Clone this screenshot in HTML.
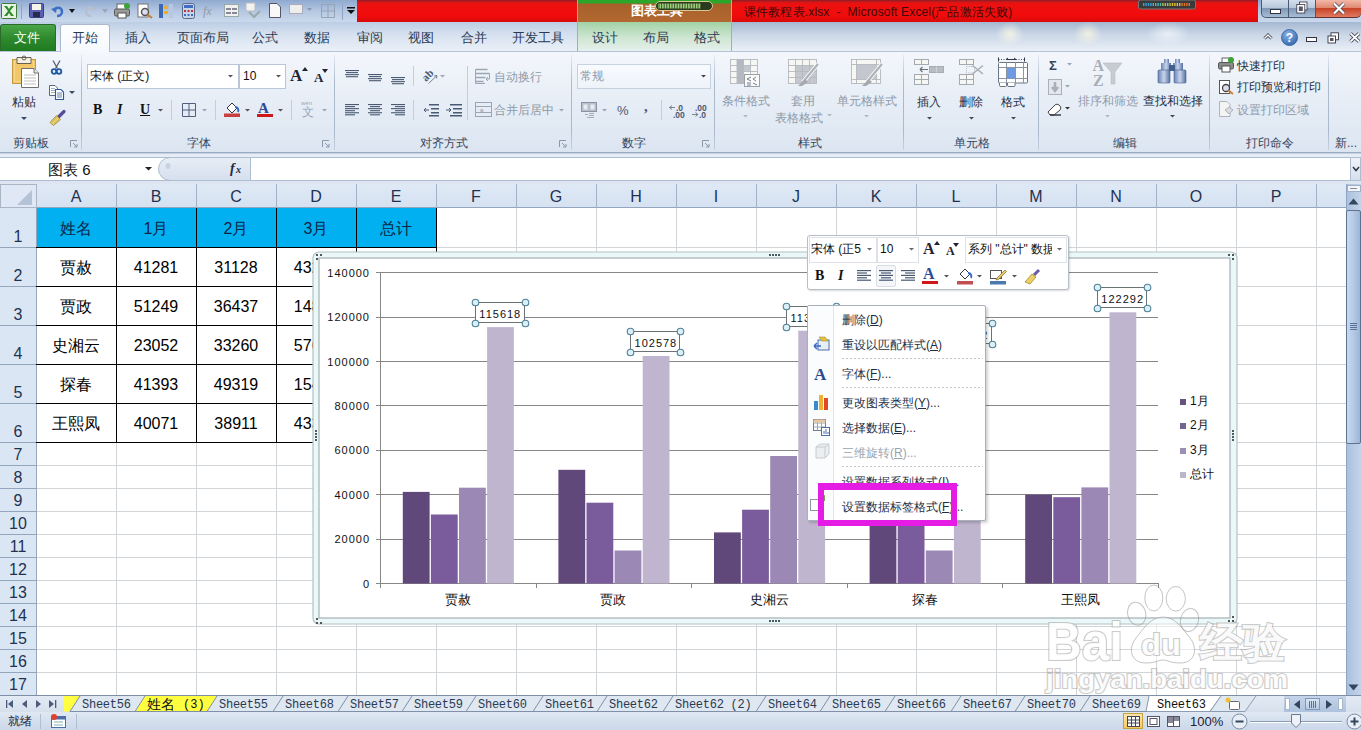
<!DOCTYPE html>
<html><head><meta charset="utf-8">
<style>
*{margin:0;padding:0;box-sizing:border-box}
html,body{width:1361px;height:730px;overflow:hidden;background:#fff;font-family:"Liberation Sans",sans-serif;position:relative}
.a{position:absolute}
.t{position:absolute;white-space:nowrap;line-height:1}
svg{position:absolute;overflow:visible}
</style></head><body>

<div class="a" style="left:0px;top:0px;width:1361px;height:24px;background:linear-gradient(#8fa9cf,#b4c7e2 45%,#cfdcee)"></div>
<svg style="left:1px;top:3px" width="16" height="16"><rect x="0.5" y="0.5" width="15" height="15" rx="1" fill="#e8f4e0" stroke="#3c7a3c"/><path d="M3 3 L7 8 L3 13 H6 L8 10 L10 13 H13 L9 8 L13 3 H10 L8 6 L6 3Z" fill="#2e8b2e"/></svg>
<div class="a" style="left:21px;top:4px;width:1px;height:15px;background:#8ea4c2"></div>
<svg style="left:29px;top:3px" width="15" height="15"><rect x="0.5" y="0.5" width="14" height="14" rx="1" fill="#5a5fb0" stroke="#3a3f80"/><rect x="3" y="1" width="9" height="6" fill="#f4f4e8"/><rect x="4" y="9" width="7" height="5" fill="#2a2a50"/></svg>
<svg style="left:51px;top:4px" width="14" height="14"><path d="M3 7 C3 3 11 2 11 8 C11 11 8 12 6 12" stroke="#3f6fc2" stroke-width="2.5" fill="none"/><path d="M0 5 L6 3 L5 9Z" fill="#3f6fc2"/></svg>
<svg style="left:69px;top:9px" width="6" height="4"><path d="M0 0H6L3 4Z" fill="#111"/></svg>
<svg style="left:83px;top:4px" width="14" height="14"><path d="M11 7 C11 3 3 2 3 8 C3 11 6 12 8 12" stroke="#b7c0cc" stroke-width="2.5" fill="none"/></svg>
<svg style="left:102px;top:9px" width="6" height="4"><path d="M0 0H6L3 4Z" fill="#9aa6b6"/></svg>
<svg style="left:114px;top:3px" width="16" height="16"><rect x="3" y="1" width="9" height="6" fill="#fff" stroke="#666"/><rect x="0.5" y="6" width="15" height="7" rx="1.5" fill="#9a9a9a" stroke="#555"/><rect x="4" y="10" width="8" height="5" fill="#fff" stroke="#555"/><circle cx="13" cy="3" r="3" fill="#3aa43a"/></svg>
<svg style="left:137px;top:3px" width="16" height="16"><rect x="1" y="1" width="10" height="13" fill="#fff" stroke="#777"/><circle cx="8" cy="9" r="3.5" fill="#dde" stroke="#555" stroke-width="1.5"/><path d="M10.5 11.5 L15 15" stroke="#c98030" stroke-width="2"/></svg>
<svg style="left:158px;top:3px" width="16" height="16"><rect x="1" y="1" width="4" height="14" fill="#3c68b8"/><rect x="6" y="3" width="4" height="3" fill="#e8b030"/><rect x="6" y="8" width="4" height="3" fill="#e8b030"/><rect x="11" y="1" width="4" height="14" fill="#b8c8e0"/></svg>
<svg style="left:182px;top:3px" width="13" height="16"><rect x="0.5" y="0.5" width="12" height="15" rx="2" fill="#c8d4e8" stroke="#5a6a88"/><rect x="2" y="2" width="9" height="3" fill="#3f6fc2"/><g fill="#c03030"><rect x="2" y="7" width="2" height="2"/><rect x="5.5" y="7" width="2" height="2"/><rect x="9" y="7" width="2" height="2"/></g><g fill="#3f6fc2"><rect x="2" y="11" width="2" height="2"/><rect x="5.5" y="11" width="2" height="2"/><rect x="9" y="11" width="2" height="2"/></g></svg>
<div class="t" style="left:203px;top:5px;font-size:12px;color:#8f9aa8;font-family:'Liberation Serif',serif"><i>fx</i></div>
<svg style="left:224px;top:4px" width="15" height="13"><rect x="0.5" y="0.5" width="14" height="12" fill="#f0f0f0" stroke="#9aa"/><rect x="2" y="4" width="5" height="2" fill="#889"/><rect x="8" y="4" width="5" height="2" fill="#889"/><rect x="2" y="8" width="5" height="2" fill="#889"/><rect x="8" y="8" width="5" height="2" fill="#889"/></svg>
<svg style="left:245px;top:3px" width="16" height="16"><rect x="1" y="0" width="9" height="8" fill="#f2f2f2" stroke="#bbb"/><path d="M4 9 L9 14 L15 8" stroke="#9aa" stroke-width="2" fill="none"/></svg>
<svg style="left:269px;top:3px" width="12" height="15"><path d="M0.5 0.5 H8 L11.5 4 V14.5 H0.5Z" fill="#f8f8f8" stroke="#556"/></svg>
<svg style="left:289px;top:4px" width="16" height="14"><rect x="0.5" y="0.5" width="13" height="9" fill="#eee" stroke="#aab"/><path d="M4 10 L7 14 L8 10" fill="#ccd"/></svg>
<svg style="left:307px;top:8px" width="5" height="3"><path d="M0 0H5L2.5 3Z" fill="#8a96a6"/></svg>
<svg style="left:321px;top:4px" width="14" height="14"><path d="M0.5 0.5H13.5V13.5H0.5ZM7 0.5V13.5M0.5 7H13.5" stroke="#95a3b5" fill="none"/></svg>
<div class="a" style="left:342px;top:4px;width:1px;height:16px;background:#8ea4c2"></div>
<svg style="left:347px;top:7px" width="8" height="8"><rect x="0" y="0" width="8" height="1.5" fill="#111"/><path d="M0 3H8L4 7Z" fill="#111"/></svg>
<div class="a" style="left:357px;top:0px;width:901px;height:22px;background:linear-gradient(#8a1c28 0,#d01818 2px,#ee1010 4px,#f20c0c 70%,#d80a0a)"></div>
<div class="a" style="left:578px;top:0px;width:154px;height:22px;background:linear-gradient(#2aa62a 0,#2aa62a 3px,#a8602a 4px,#b26830 100%)"></div>
<div class="a" style="left:577px;top:0px;width:1px;height:50px;background:#9ab89a"></div>
<div class="a" style="left:731px;top:0px;width:1px;height:50px;background:#9ab89a"></div>
<div class="t" style="left:631px;top:4px;font-size:13px;color:#fff;font-weight:bold">图表工具</div>
<svg style="left:655px;top:1px" width="58" height="10"><rect x="0.5" y="0.5" width="57" height="9" rx="4.5" fill="#2c3a1e" stroke="#d8c890"/><rect x="3" y="2.5" width="43" height="5" fill="#9ad07a"/><g stroke="#2c3a1e" stroke-width="0.8"><line x1="4.0" y1="2" x2="4.0" y2="8"/><line x1="6.6" y1="2" x2="6.6" y2="8"/><line x1="9.2" y1="2" x2="9.2" y2="8"/><line x1="11.8" y1="2" x2="11.8" y2="8"/><line x1="14.4" y1="2" x2="14.4" y2="8"/><line x1="17.0" y1="2" x2="17.0" y2="8"/><line x1="19.6" y1="2" x2="19.6" y2="8"/><line x1="22.2" y1="2" x2="22.2" y2="8"/><line x1="24.8" y1="2" x2="24.8" y2="8"/><line x1="27.400000000000002" y1="2" x2="27.400000000000002" y2="8"/><line x1="30.0" y1="2" x2="30.0" y2="8"/><line x1="32.6" y1="2" x2="32.6" y2="8"/><line x1="35.2" y1="2" x2="35.2" y2="8"/><line x1="37.800000000000004" y1="2" x2="37.800000000000004" y2="8"/><line x1="40.4" y1="2" x2="40.4" y2="8"/><line x1="43.0" y1="2" x2="43.0" y2="8"/><line x1="45.6" y1="2" x2="45.6" y2="8"/></g></svg>
<div class="t" style="left:744px;top:6px;font-size:12px;color:#3a0a0a;white-space:pre;letter-spacing:0.15px">课件教程表.xlsx  -  Microsoft Excel(产品激活失败)</div>
<svg style="left:1138px;top:0px" width="58" height="10"><rect x="0.5" y="0" width="57" height="9" rx="2" fill="#3a3a3a" stroke="#777"/><rect x="5.0" y="3" width="1.4" height="3" fill="#3aa0d8"/><rect x="7.4" y="3" width="1.4" height="3" fill="#3aa0d8"/><rect x="9.8" y="3" width="1.4" height="3" fill="#3aa0d8"/><rect x="12.2" y="3" width="1.4" height="3" fill="#3aa0d8"/><rect x="14.6" y="3" width="1.4" height="3" fill="#48b8b8"/><rect x="17.0" y="3" width="1.4" height="3" fill="#48b8b8"/><rect x="19.4" y="3" width="1.4" height="3" fill="#48b8b8"/><rect x="21.8" y="3" width="1.4" height="3" fill="#48b8b8"/><rect x="24.2" y="3" width="1.4" height="3" fill="#a8c848"/><rect x="26.599999999999998" y="3" width="1.4" height="3" fill="#a8c848"/><rect x="29.0" y="3" width="1.4" height="3" fill="#a8c848"/><rect x="31.4" y="3" width="1.4" height="3" fill="#a8c848"/><rect x="33.8" y="3" width="1.4" height="3" fill="#e8c030"/><rect x="36.2" y="3" width="1.4" height="3" fill="#e8c030"/><rect x="38.6" y="3" width="1.4" height="3" fill="#e8c030"/><rect x="41.0" y="3" width="1.4" height="3" fill="#e8c030"/><rect x="43.4" y="3" width="1.4" height="3" fill="#e87030"/><rect x="45.8" y="3" width="1.4" height="3" fill="#e87030"/><rect x="48.199999999999996" y="3" width="1.4" height="3" fill="#e87030"/><rect x="50.6" y="3" width="1.4" height="3" fill="#e87030"/></svg>
<div class="a" style="left:1261px;top:0px;width:100px;height:18px;background:linear-gradient(#d4dfec,#b8c8dc 45%,#8098b6 50%,#a8bcd4);border:1px solid #4a5a72;border-top:none;border-radius:0 0 5px 5px"></div>
<div class="a" style="left:1315px;top:0px;width:46px;height:18px;background:linear-gradient(#f2b8a8,#e08870 45%,#c84428 50%,#e07a60);border-radius:0 0 5px 0;border-bottom:1px solid #6a3030"></div>
<div class="a" style="left:1288px;top:0px;width:1px;height:17px;background:#4a5a72"></div>
<div class="a" style="left:1315px;top:0px;width:1px;height:17px;background:#4a5a72"></div>
<div class="a" style="left:1270px;top:9px;width:11px;height:5px;background:#fff;border:1px solid #334"></div>
<svg style="left:1295px;top:1px" width="13" height="14"><rect x="4.5" y="1" width="7.5" height="8" fill="#fff" stroke="#334" stroke-width="0.8"/><rect x="1.8" y="3.5" width="8" height="8.5" fill="#fff" stroke="#334" stroke-width="0.8"/><rect x="3.8" y="5.5" width="4" height="4.5" fill="#556"/></svg>
<svg style="left:1332px;top:2px" width="14" height="13"><path d="M2 1.5L12 11.5M12 1.5L2 11.5" stroke="#445" stroke-width="3.6"/><path d="M2 1.5L12 11.5M12 1.5L2 11.5" stroke="#fff" stroke-width="2.2"/></svg>
<div class="a" style="left:0px;top:22px;width:1361px;height:29px;background:linear-gradient(#bccde4,#d5e0ef 40%,#eaf0f7)"></div>
<div class="a" style="left:578px;top:22px;width:154px;height:29px;background:linear-gradient(#a2d2a6,#cfe6d2 55%,#e6f0ec)"></div>
<div class="a" style="left:577px;top:22px;width:1px;height:29px;background:#8cbf8c"></div>
<div class="a" style="left:731px;top:22px;width:1px;height:29px;background:#8cbf8c"></div>
<div class="a" style="left:0px;top:24px;width:56px;height:27px;background:linear-gradient(#4aa548,#2f8a2e 50%,#1f7a20);border-radius:3px 3px 0 0;border:1px solid #2a6a2a;border-bottom:none"></div>
<div class="t" style="left:14px;top:31px;font-size:13px;color:#f4fff0;">文件</div>
<div class="a" style="left:60px;top:24px;width:50px;height:28px;background:linear-gradient(#fdfeff,#f6f9fd);border:1px solid #aab9cd;border-bottom:none;border-radius:3px 3px 0 0"></div>
<div class="t" style="left:72px;top:31px;font-size:13px;color:#2a3a52;">开始</div>
<div class="t" style="left:125px;top:31px;font-size:13px;color:#2a3a52;">插入</div>
<div class="t" style="left:177px;top:31px;font-size:13px;color:#2a3a52;">页面布局</div>
<div class="t" style="left:252px;top:31px;font-size:13px;color:#2a3a52;">公式</div>
<div class="t" style="left:304px;top:31px;font-size:13px;color:#2a3a52;">数据</div>
<div class="t" style="left:357px;top:31px;font-size:13px;color:#2a3a52;">审阅</div>
<div class="t" style="left:408px;top:31px;font-size:13px;color:#2a3a52;">视图</div>
<div class="t" style="left:461px;top:31px;font-size:13px;color:#2a3a52;">合并</div>
<div class="t" style="left:512px;top:31px;font-size:13px;color:#2a3a52;">开发工具</div>
<div class="t" style="left:592px;top:31px;font-size:13px;color:#2a3a52;">设计</div>
<div class="t" style="left:643px;top:31px;font-size:13px;color:#2a3a52;">布局</div>
<div class="t" style="left:694px;top:31px;font-size:13px;color:#2a3a52;">格式</div>
<div class="a" style="left:732px;top:22px;width:629px;height:29px;background:radial-gradient(ellipse 14px 12px at 278px 12px,rgba(250,248,230,0.8),rgba(250,248,230,0) 100%),radial-gradient(ellipse 14px 12px at 356px 12px,rgba(250,246,225,0.8),rgba(250,246,225,0) 100%),radial-gradient(ellipse 22px 12px at 436px 12px,rgba(240,244,250,0.8),rgba(240,244,250,0) 100%),linear-gradient(rgba(150,170,196,0.6),rgba(190,204,222,0.45) 45%,rgba(238,242,248,0.2))"></div>
<svg style="left:1263px;top:33px" width="10" height="7"><path d="M1.5 5.5L5 2L8.5 5.5" stroke="#334" stroke-width="3" fill="none"/><path d="M1.5 5.5L5 2L8.5 5.5" stroke="#fff" stroke-width="1.4" fill="none"/></svg>
<svg style="left:1281px;top:29px" width="17" height="17"><defs><radialGradient id="hq" cx="0.4" cy="0.3" r="0.7"><stop offset="0" stop-color="#8ab4e8"/><stop offset="1" stop-color="#3a6cb0"/></radialGradient></defs><circle cx="8.5" cy="8.5" r="8" fill="url(#hq)" stroke="#2d5a98" stroke-width="0.8"/><text x="8.5" y="13" font-size="12" font-weight="bold" text-anchor="middle" fill="#fff" font-family="Liberation Sans">?</text></svg>
<div class="a" style="left:1306px;top:37px;width:11px;height:5px;background:#fff;border:1px solid #334"></div>
<svg style="left:1327px;top:32px" width="13" height="12"><rect x="4" y="0.8" width="7.5" height="7" fill="#fff" stroke="#334" stroke-width="0.9"/><rect x="1" y="4" width="7.5" height="7" fill="#fff" stroke="#334" stroke-width="0.9"/><rect x="3" y="6" width="3.5" height="3" fill="#556"/></svg>
<svg style="left:1349px;top:32px" width="12" height="11"><path d="M1.5 1.5L10 9.5M10 1.5L1.5 9.5" stroke="#334" stroke-width="3.4"/><path d="M1.5 1.5L10 9.5M10 1.5L1.5 9.5" stroke="#fff" stroke-width="1.8"/></svg>
<div class="a" style="left:0px;top:51px;width:1361px;height:103px;background:linear-gradient(#f4f7fc,#e9eff7 40%,#dbe5f1 100%)"></div>
<div class="a" style="left:0px;top:51px;width:1361px;height:1px;background:#b4c3d7"></div>
<div class="a" style="left:61px;top:50px;width:48px;height:3px;background:#f5f8fc"></div>
<div class="a" style="left:0px;top:152px;width:1361px;height:1px;background:#9aabc2"></div>
<div class="a" style="left:0px;top:153px;width:1361px;height:1px;background:#c4d1e2"></div>
<div class="a" style="left:81px;top:55px;width:1px;height:95px;background:linear-gradient(rgba(160,176,198,0.2),#aab9cc 30%,#aab9cc 80%,rgba(160,176,198,0.4))"></div>
<div class="a" style="left:334px;top:55px;width:1px;height:95px;background:linear-gradient(rgba(160,176,198,0.2),#aab9cc 30%,#aab9cc 80%,rgba(160,176,198,0.4))"></div>
<div class="a" style="left:571px;top:55px;width:1px;height:95px;background:linear-gradient(rgba(160,176,198,0.2),#aab9cc 30%,#aab9cc 80%,rgba(160,176,198,0.4))"></div>
<div class="a" style="left:714px;top:55px;width:1px;height:95px;background:linear-gradient(rgba(160,176,198,0.2),#aab9cc 30%,#aab9cc 80%,rgba(160,176,198,0.4))"></div>
<div class="a" style="left:903px;top:55px;width:1px;height:95px;background:linear-gradient(rgba(160,176,198,0.2),#aab9cc 30%,#aab9cc 80%,rgba(160,176,198,0.4))"></div>
<div class="a" style="left:1038px;top:55px;width:1px;height:95px;background:linear-gradient(rgba(160,176,198,0.2),#aab9cc 30%,#aab9cc 80%,rgba(160,176,198,0.4))"></div>
<div class="a" style="left:1209px;top:55px;width:1px;height:95px;background:linear-gradient(rgba(160,176,198,0.2),#aab9cc 30%,#aab9cc 80%,rgba(160,176,198,0.4))"></div>
<div class="a" style="left:1328px;top:55px;width:1px;height:95px;background:linear-gradient(rgba(160,176,198,0.2),#aab9cc 30%,#aab9cc 80%,rgba(160,176,198,0.4))"></div>
<svg style="left:11px;top:55px" width="30" height="34"><rect x="1.5" y="4.5" width="23" height="24" fill="#f2c66a" stroke="#c99a3a"/><rect x="3.5" y="6.5" width="19" height="20" fill="none" stroke="#f8dc98" stroke-width="0.8"/><path d="M6 2.5H20V8.5H6Z" fill="#f4f0e4" stroke="#6a6050"/><circle cx="13" cy="3" r="2" fill="none" stroke="#6a6050"/><path d="M10.5 13.5H23L27.5 18V32.5H10.5Z" fill="#fff" stroke="#707070"/><path d="M23 13.5V18H27.5" fill="#e8e8e8" stroke="#707070"/><g stroke="#c0c0c0"><line x1="13" y1="20" x2="25" y2="20"/><line x1="13" y1="23" x2="25" y2="23"/><line x1="13" y1="26" x2="25" y2="26"/><line x1="13" y1="29" x2="25" y2="29"/></g></svg>
<div class="t" style="left:12px;top:96px;font-size:12px;color:#1e2e44;">粘贴</div>
<svg style="left:21px;top:117px" width="6" height="3.5"><path d="M0 0H6L3.0 3.0Z" fill="#3a4a60"/></svg>
<svg style="left:51px;top:60px" width="11" height="15"><path d="M2 0.5L6.5 8.5M9 0.5L4.5 8.5" stroke="#5a6070" stroke-width="1.3"/><circle cx="3" cy="11.5" r="2.3" fill="#dfe8f4" stroke="#1f5aa0" stroke-width="1.8"/><circle cx="8" cy="11.5" r="2.3" fill="#dfe8f4" stroke="#1f5aa0" stroke-width="1.8"/></svg>
<svg style="left:49px;top:85px" width="16" height="15"><path d="M0.5 0.5H6L8.5 3V10.5H0.5Z" fill="#fff" stroke="#5a6a80"/><path d="M2 3.5H6M2 5.5H7M2 7.5H7" stroke="#8a9ab0" stroke-width="0.8"/><path d="M6.5 4.5H12L14.5 7V14.5H6.5Z" fill="#fff" stroke="#2a5a9a" stroke-width="1.1"/><path d="M8 8H13M8 10H13M8 12H13" stroke="#4a74b0" stroke-width="0.9"/></svg>
<svg style="left:69px;top:91px" width="6" height="3.5"><path d="M0 0H6L3.0 3.0Z" fill="#3a4a60"/></svg>
<svg style="left:49px;top:110px" width="17" height="16"><path d="M10 6.5L15 1.5" stroke="#5a4a9a" stroke-width="3.2" stroke-linecap="round"/><path d="M1 12.5L7.5 5.5L11.5 9.5L4.5 15.5Z" fill="#e8d070" stroke="#9a8030" stroke-width="0.8"/><path d="M3 12L8 7M5 13.5L10 9" stroke="#c8a840" stroke-width="0.7"/></svg>
<div class="t" style="left:13px;top:137px;font-size:12px;color:#34455c;">剪贴板</div>
<svg style="left:70px;top:140px" width="8" height="8"><path d="M0.5 7V0.5H7" stroke="#8a98ac" fill="none"/><path d="M3 3L7 7M7 4V7H4" stroke="#8a98ac" fill="none"/></svg>
<div class="a" style="left:87px;top:64px;width:152px;height:25px;background:#fff;border:1px solid #b8c6d8"></div>
<div class="a" style="left:239px;top:64px;width:47px;height:25px;background:#fff;border:1px solid #b8c6d8"></div>
<div class="t" style="left:90px;top:70px;font-size:12px;color:#111;">宋体 (正文)</div>
<svg style="left:228px;top:75px" width="5" height="3.0"><path d="M0 0H5L2.5 2.5Z" fill="#555"/></svg>
<div class="t" style="left:243px;top:70px;font-size:12px;color:#111;">10</div>
<svg style="left:276px;top:75px" width="5" height="3.0"><path d="M0 0H5L2.5 2.5Z" fill="#555"/></svg>
<div class="t" style="left:290px;top:67px;font-size:17px;color:#223;font-family:'Liberation Serif',serif;font-weight:bold">A</div>
<svg style="left:302px;top:67px" width="6" height="4"><path d="M0 4L3 0L6 4Z" fill="#223"/></svg>
<div class="t" style="left:314px;top:71px;font-size:13px;color:#223;font-family:'Liberation Serif',serif;font-weight:bold">A</div>
<svg style="left:322px;top:69px" width="6" height="4"><path d="M0 0L3 4L6 0Z" fill="#223"/></svg>
<div class="t" style="left:93px;top:103px;font-size:14px;color:#111;font-family:'Liberation Serif',serif;font-weight:bold">B</div>
<div class="t" style="left:117px;top:103px;font-size:14px;color:#111;font-family:'Liberation Serif',serif;font-style:italic;font-weight:bold">I</div>
<div class="t" style="left:140px;top:103px;font-size:14px;color:#111;font-family:'Liberation Serif',serif;font-weight:bold"><u>U</u></div>
<svg style="left:158px;top:109px" width="5" height="3.0"><path d="M0 0H5L2.5 2.5Z" fill="#555"/></svg>
<div class="a" style="left:171px;top:100px;width:1px;height:20px;background:#c2cedd"></div>
<svg style="left:182px;top:103px" width="14" height="14"><path d="M0.5 0.5H13.5V13.5H0.5ZM7 0.5V13.5M0.5 7H13.5" stroke="#50607a" fill="none"/></svg>
<svg style="left:202px;top:109px" width="5" height="3.0"><path d="M0 0H5L2.5 2.5Z" fill="#9aa6b6"/></svg>
<div class="a" style="left:215px;top:100px;width:1px;height:20px;background:#c2cedd"></div>
<svg style="left:224px;top:102px" width="16" height="15"><path d="M3 6L8 1L13 6L8 11Z" fill="#fff" stroke="#333"/><path d="M11 5C14 5 15 8 14 10" stroke="#3a6ac8" stroke-width="2" fill="none"/><rect x="0" y="11.5" width="16" height="3.5" fill="#c84040"/></svg>
<svg style="left:245px;top:109px" width="5" height="3.0"><path d="M0 0H5L2.5 2.5Z" fill="#555"/></svg>
<div class="t" style="left:258px;top:101px;font-size:15px;color:#2a4a9a;font-family:'Liberation Serif',serif;font-weight:bold">A</div>
<div class="a" style="left:257px;top:114px;width:16px;height:3px;background:#d01818"></div>
<svg style="left:278px;top:109px" width="5" height="3.0"><path d="M0 0H5L2.5 2.5Z" fill="#555"/></svg>
<div class="a" style="left:291px;top:100px;width:1px;height:20px;background:#c2cedd"></div>
<div class="t" style="left:301px;top:100px;font-size:6px;color:#9aa6b6;">wén</div>
<div class="t" style="left:302px;top:106px;font-size:12px;color:#9aa6b6;">文</div>
<svg style="left:322px;top:109px" width="5" height="3.0"><path d="M0 0H5L2.5 2.5Z" fill="#9aa6b6"/></svg>
<div class="t" style="left:187px;top:137px;font-size:12px;color:#34455c;">字体</div>
<svg style="left:322px;top:140px" width="8" height="8"><path d="M0.5 7V0.5H7" stroke="#8a98ac" fill="none"/><path d="M3 3L7 7M7 4V7H4" stroke="#8a98ac" fill="none"/></svg>
<svg style="left:345px;top:70px" width="16" height="16"><rect x="0" y="0.00" width="14" height="1.1" fill="#4a5a72"/><rect x="1" y="2.05" width="12" height="1.1" fill="#4a5a72"/><rect x="0" y="4.10" width="14" height="1.1" fill="#4a5a72"/><rect x="1" y="6.15" width="12" height="1.1" fill="#4a5a72"/></svg>
<svg style="left:368px;top:74px" width="16" height="16"><rect x="0" y="0.00" width="14" height="1.1" fill="#4a5a72"/><rect x="1" y="2.05" width="12" height="1.1" fill="#4a5a72"/><rect x="0" y="4.10" width="14" height="1.1" fill="#4a5a72"/><rect x="1" y="6.15" width="12" height="1.1" fill="#4a5a72"/></svg>
<svg style="left:391px;top:77px" width="16" height="16"><rect x="0" y="0.00" width="14" height="1.1" fill="#4a5a72"/><rect x="1" y="2.05" width="12" height="1.1" fill="#4a5a72"/><rect x="0" y="4.10" width="14" height="1.1" fill="#4a5a72"/><rect x="1" y="6.15" width="12" height="1.1" fill="#4a5a72"/></svg>
<svg style="left:345px;top:104px" width="16" height="16"><rect x="0" y="0.00" width="14" height="1.1" fill="#4a5a72"/><rect x="0" y="2.05" width="10" height="1.1" fill="#4a5a72"/><rect x="0" y="4.10" width="14" height="1.1" fill="#4a5a72"/><rect x="0" y="6.15" width="10" height="1.1" fill="#4a5a72"/><rect x="0" y="8.20" width="14" height="1.1" fill="#4a5a72"/><rect x="0" y="10.25" width="10" height="1.1" fill="#4a5a72"/></svg>
<svg style="left:368px;top:104px" width="16" height="16"><rect x="0" y="0.00" width="14" height="1.1" fill="#4a5a72"/><rect x="2" y="2.05" width="10" height="1.1" fill="#4a5a72"/><rect x="0" y="4.10" width="14" height="1.1" fill="#4a5a72"/><rect x="2" y="6.15" width="10" height="1.1" fill="#4a5a72"/><rect x="0" y="8.20" width="14" height="1.1" fill="#4a5a72"/><rect x="2" y="10.25" width="10" height="1.1" fill="#4a5a72"/></svg>
<svg style="left:391px;top:104px" width="16" height="16"><rect x="0" y="0.00" width="14" height="1.1" fill="#4a5a72"/><rect x="4" y="2.05" width="10" height="1.1" fill="#4a5a72"/><rect x="0" y="4.10" width="14" height="1.1" fill="#4a5a72"/><rect x="4" y="6.15" width="10" height="1.1" fill="#4a5a72"/><rect x="0" y="8.20" width="14" height="1.1" fill="#4a5a72"/><rect x="4" y="10.25" width="10" height="1.1" fill="#4a5a72"/></svg>
<div class="a" style="left:413px;top:66px;width:1px;height:20px;background:#c2cedd"></div>
<div class="a" style="left:413px;top:100px;width:1px;height:20px;background:#c2cedd"></div>
<svg style="left:421px;top:68px" width="18" height="17"><text x="0" y="0" font-size="11" fill="#4a5a72" font-family="Liberation Serif" font-weight="bold" transform="translate(5 14) rotate(-45)">ab</text><path d="M7.5 15.5L16 7.5M16 7.5L13 8M16 7.5L15.5 10.5" stroke="#6a7888" stroke-width="0.9" fill="none"/></svg>
<svg style="left:440px;top:75px" width="5" height="3.0"><path d="M0 0H5L2.5 2.5Z" fill="#9aa6b6"/></svg>
<svg style="left:423px;top:103px" width="16" height="14"><g fill="#4a5a72"><rect x="6" y="1" width="10" height="1.5"/><rect x="8" y="5" width="8" height="1.5"/><rect x="8" y="9" width="8" height="1.5"/><rect x="6" y="12" width="10" height="1.5"/></g><path d="M1 7H6M1 7L3 5M1 7L3 9" stroke="#4a5a72"/></svg>
<svg style="left:446px;top:103px" width="16" height="14"><g fill="#4a5a72"><rect x="4" y="1" width="12" height="1.5"/><rect x="7" y="5" width="9" height="1.5"/><rect x="7" y="9" width="9" height="1.5"/><rect x="4" y="12" width="12" height="1.5"/></g><path d="M0 7H5M5 7L3 5M5 7L3 9" stroke="#4a5a72"/></svg>
<div class="a" style="left:467px;top:66px;width:1px;height:54px;background:#c2cedd"></div>
<svg style="left:475px;top:69px" width="17" height="15"><path d="M0.5 0.5H12.5M0.5 4.5H14.5M0.5 8.5H10.5M0.5 12.5H8.5" stroke="#9aa6b6" stroke-width="1.3"/><path d="M0.5 0.5V14.5H10" stroke="#9aa6b6" fill="none"/><path d="M14.5 4.5V10H11M11 10L13 8M11 10L13 12" stroke="#9aa6b6" fill="none"/></svg>
<div class="t" style="left:494px;top:71px;font-size:12px;color:#8e9aa9;">自动换行</div>
<svg style="left:475px;top:102px" width="17" height="15"><rect x="0.5" y="0.5" width="16" height="14" fill="none" stroke="#9aa6b6"/><path d="M0.5 4.5H16.5M0.5 10.5H16.5" stroke="#9aa6b6"/><text x="5" y="10" font-size="6" fill="#8a96a6" font-family="Liberation Sans">a</text></svg>
<div class="t" style="left:494px;top:104px;font-size:12px;color:#8e9aa9;">合并后居中</div>
<svg style="left:559px;top:109px" width="5" height="3.0"><path d="M0 0H5L2.5 2.5Z" fill="#9aa6b6"/></svg>
<div class="t" style="left:420px;top:137px;font-size:12px;color:#34455c;">对齐方式</div>
<svg style="left:559px;top:140px" width="8" height="8"><path d="M0.5 7V0.5H7" stroke="#8a98ac" fill="none"/><path d="M3 3L7 7M7 4V7H4" stroke="#8a98ac" fill="none"/></svg>
<div class="a" style="left:577px;top:64px;width:134px;height:25px;background:linear-gradient(#f8fbfe,#eef3fa);border:1px solid #c6d2e0"></div>
<div class="t" style="left:580px;top:70px;font-size:12px;color:#8e9aa9;">常规</div>
<svg style="left:701px;top:75px" width="5" height="3.0"><path d="M0 0H5L2.5 2.5Z" fill="#444"/></svg>
<svg style="left:581px;top:102px" width="17" height="17"><rect x="0.5" y="0.5" width="15" height="9" fill="#b8c0cc" stroke="#8a94a2"/><rect x="2.5" y="2.5" width="4" height="5" fill="#e8ecf2"/><rect x="9.5" y="2.5" width="4" height="5" fill="#e8ecf2"/><path d="M4 12.5H7M8 11.5H13M8 13.5H13M6 15.5H13" stroke="#9aa4b2" stroke-width="0.9"/></svg>
<svg style="left:602px;top:109px" width="5" height="3.0"><path d="M0 0H5L2.5 2.5Z" fill="#9aa6b6"/></svg>
<div class="t" style="left:617px;top:104px;font-size:13px;color:#4a5a72;">%</div>
<div class="t" style="left:644px;top:99px;font-size:15px;color:#4a5a72;font-weight:bold;font-family:'Liberation Serif',serif">,</div>
<div class="a" style="left:661px;top:100px;width:1px;height:20px;background:#c2cedd"></div>
<svg style="left:669px;top:104px" width="20" height="15"><text x="7" y="7" font-size="8.5" fill="#4a5a72" font-family="Liberation Sans" font-weight="bold">.0</text><text x="4" y="14" font-size="8.5" fill="#4a5a72" font-family="Liberation Sans" font-weight="bold">.00</text><path d="M0.5 3.5H6M0.5 3.5L3 1.5M0.5 3.5L3 5.5" stroke="#6a7888" stroke-width="0.9" fill="none"/></svg>
<svg style="left:691px;top:104px" width="20" height="15"><text x="4" y="7" font-size="8.5" fill="#4a5a72" font-family="Liberation Sans" font-weight="bold">.00</text><text x="8" y="14" font-size="8.5" fill="#4a5a72" font-family="Liberation Sans" font-weight="bold">.0</text><path d="M1 10.5H7M7 10.5L4.5 8.5M7 10.5L4.5 12.5" stroke="#6a7888" stroke-width="0.9" fill="none"/></svg>
<div class="t" style="left:622px;top:137px;font-size:12px;color:#34455c;">数字</div>
<svg style="left:702px;top:140px" width="8" height="8"><path d="M0.5 7V0.5H7" stroke="#8a98ac" fill="none"/><path d="M3 3L7 7M7 4V7H4" stroke="#8a98ac" fill="none"/></svg>
<svg style="left:0;top:0" width="1361" height="160"><rect x="730.5" y="59.5" width="27" height="24" fill="#f6f6f2"/><rect x="737" y="59.5" width="6.5" height="24" fill="#b4b8c0"/><rect x="743.5" y="65.5" width="6.5" height="6" fill="#c4c8ce"/><g stroke="#b4b8be" stroke-width="0.9" fill="none"><rect x="730.5" y="59.5" width="27" height="24"/><path d="M737 59.5V83.5M743.5 59.5V83.5M750.5 59.5V83.5M730.5 65.5H757.5M730.5 71.5H757.5M730.5 77.5H757.5"/></g><rect x="744.5" y="74.5" width="15" height="12" fill="#fafafa" stroke="#9aa0a8"/><path d="M747 79L751 77M747 79L751 81M747 83H751M747 85H751M756 77L753 79L756 81M753 83L757 85" stroke="#6a7080" stroke-width="0.9" fill="none"/><rect x="788.5" y="59.5" width="28" height="24" fill="#f6f6f2"/><rect x="795.5" y="65.5" width="21" height="18" fill="#c4c8ce"/><g stroke="#b4b8be" stroke-width="0.9" fill="none"><rect x="788.5" y="59.5" width="28" height="24"/><path d="M795.5 59.5V83.5M802.5 59.5V83.5M809.5 59.5V83.5M788.5 65.5H816.5M788.5 71.5H816.5M788.5 77.5H816.5"/></g><path d="M818 64L803 82" stroke="#fff" stroke-width="4"/><path d="M818 64L803 82" stroke="#b0b4ba" stroke-width="2.4"/><path d="M805 79L798 86L802 86L808 82Z" fill="#a4a8b0"/><rect x="851.5" y="59.5" width="29" height="24" fill="#f6f6f2"/><rect x="856.5" y="64.5" width="20" height="15" fill="#c4c8ce"/><g stroke="#b4b8be" stroke-width="0.9" fill="none"><rect x="851.5" y="59.5" width="29" height="24"/><path d="M856.5 59.5V83.5M876.5 59.5V83.5M851.5 64.5H880.5M851.5 79.5H880.5"/></g><path d="M882 64L867 82" stroke="#fff" stroke-width="4"/><path d="M882 64L867 82" stroke="#b0b4ba" stroke-width="2.4"/><path d="M869 79L862 86L866 86L872 82Z" fill="#a4a8b0"/></svg>
<div class="t" style="left:722px;top:95px;font-size:12px;color:#8e9aa9;">条件格式</div>
<svg style="left:743px;top:115px" width="5" height="3.0"><path d="M0 0H5L2.5 2.5Z" fill="#b0b8c4"/></svg>
<div class="t" style="left:791px;top:95px;font-size:12px;color:#8e9aa9;">套用</div>
<div class="t" style="left:775px;top:112px;font-size:12px;color:#8e9aa9;">表格格式</div>
<svg style="left:827px;top:114px" width="5" height="3.0"><path d="M0 0H5L2.5 2.5Z" fill="#b0b8c4"/></svg>
<div class="t" style="left:837px;top:95px;font-size:12px;color:#8e9aa9;">单元格样式</div>
<svg style="left:864px;top:115px" width="5" height="3.0"><path d="M0 0H5L2.5 2.5Z" fill="#b0b8c4"/></svg>
<div class="t" style="left:798px;top:137px;font-size:12px;color:#34455c;">样式</div>
<svg style="left:0;top:0" width="1361" height="160"><rect x="914.5" y="59.5" width="14" height="5" fill="#f6f6f2" stroke="#a4aab2"/><line x1="921.5" y1="59.5" x2="921.5" y2="64.5" stroke="#a4aab2"/><path d="M920 69.5H928M920 69.5L922.5 67M920 69.5L922.5 72" stroke="#6a7080" stroke-width="1.2" fill="none"/><rect x="929.5" y="66.5" width="14" height="6" fill="#b8bcc4" stroke="#a8acb4"/><line x1="936.5" y1="66.5" x2="936.5" y2="72.5" stroke="#d0d4da"/><rect x="914.5" y="74.5" width="14" height="10" fill="#f6f6f2" stroke="#a4aab2"/><line x1="921.5" y1="74.5" x2="921.5" y2="84.5" stroke="#a4aab2"/><line x1="914.5" y1="79.5" x2="928.5" y2="79.5" stroke="#a4aab2"/><rect x="959.5" y="59.5" width="14" height="5" fill="#f6f6f2" stroke="#a4aab2"/><line x1="966.5" y1="59.5" x2="966.5" y2="64.5" stroke="#a4aab2"/><rect x="966.5" y="66.5" width="8" height="6.5" fill="none" stroke="#b0b4ba" stroke-dasharray="1 1.2"/><path d="M972.5 65.5L983 74M983 65.5L972.5 74" stroke="#a8acb4" stroke-width="1.6"/><rect x="959.5" y="74.5" width="14" height="10" fill="#f6f6f2" stroke="#a4aab2"/><line x1="966.5" y1="74.5" x2="966.5" y2="84.5" stroke="#a4aab2"/><line x1="959.5" y1="79.5" x2="973.5" y2="79.5" stroke="#a4aab2"/><path d="M998.5 59.5H1024.5" stroke="#556" stroke-dasharray="1 1.5"/><path d="M1006 59.5H1016M1006 59.5L1008 58M1016 59.5L1014 58" stroke="#334" fill="none"/><path d="M998.5 57.5V61.5M1024.5 57.5V61.5" stroke="#334"/><rect x="998.5" y="62.5" width="29" height="20.5" rx="1" fill="#fff" stroke="#6a7484"/><path d="M1006.5 62.5V83M1015.5 62.5V83M1023.5 62.5V83M998.5 67.5H1027.5M998.5 78.5H1027.5" stroke="#8a94a2"/><rect x="1007" y="68" width="8.5" height="10.5" fill="#6e9ae4"/><path d="M999.5 83V85.5Q999.5 86.5 1001 86.5H1005.5Q1006.5 86.5 1006.5 85.5V83M1007.5 83V85.5Q1007.5 86.5 1009 86.5H1014Q1015 86.5 1015 85.5V83" stroke="#6a7484" fill="#fff"/></svg>
<div class="t" style="left:917px;top:96px;font-size:12px;color:#1e2e44;">插入</div>
<svg style="left:927px;top:117px" width="5" height="3.0"><path d="M0 0H5L2.5 2.5Z" fill="#3a4a60"/></svg>
<div class="t" style="left:959px;top:96px;font-size:12px;color:#1e2e44;">删除</div>
<svg style="left:969px;top:117px" width="5" height="3.0"><path d="M0 0H5L2.5 2.5Z" fill="#3a4a60"/></svg>
<div class="t" style="left:1001px;top:96px;font-size:12px;color:#1e2e44;">格式</div>
<svg style="left:1011px;top:117px" width="5" height="3.0"><path d="M0 0H5L2.5 2.5Z" fill="#3a4a60"/></svg>
<div class="t" style="left:954px;top:137px;font-size:12px;color:#34455c;">单元格</div>
<div class="t" style="left:1049px;top:59px;font-size:13px;color:#34455c;font-weight:bold">Σ</div>
<svg style="left:1067px;top:63px" width="5" height="3.0"><path d="M0 0H5L2.5 2.5Z" fill="#9aa6b6"/></svg>
<svg style="left:1048px;top:79px" width="14" height="16"><rect x="0.5" y="0.5" width="13" height="15" fill="#e4e8ee" stroke="#a8b0ba"/><path d="M7 3V11M4 8L7 12L10 8" stroke="#a8b0ba" stroke-width="2.5" fill="none"/></svg>
<svg style="left:1065px;top:85px" width="5" height="3.0"><path d="M0 0H5L2.5 2.5Z" fill="#9aa6b6"/></svg>
<svg style="left:1047px;top:103px" width="15" height="13"><path d="M1 9L8 2C9 1 11 1 12 2L13 3C14 4 14 6 13 7L7 12H3Z" fill="#fff" stroke="#444"/><path d="M3 12H14" stroke="#223" stroke-width="1.3"/></svg>
<svg style="left:1065px;top:107px" width="5" height="3.0"><path d="M0 0H5L2.5 2.5Z" fill="#333"/></svg>
<svg style="left:1092px;top:57px" width="32" height="30"><path d="M11 6H30L23 15V27H19V15Z" fill="#c8ccd2" stroke="#b8bcc2" stroke-width="0.6"/><text x="0.5" y="14" font-size="16" font-weight="bold" fill="#a8aeb6" font-family="Liberation Serif">A</text><text x="1" y="29" font-size="16" font-weight="bold" fill="#a8aeb6" font-family="Liberation Serif">Z</text></svg>
<div class="t" style="left:1078px;top:95px;font-size:12px;color:#8e9aa9;">排序和筛选</div>
<svg style="left:1105px;top:115px" width="5" height="3.0"><path d="M0 0H5L2.5 2.5Z" fill="#b0b8c4"/></svg>
<svg style="left:1158px;top:59px" width="28" height="25"><defs><linearGradient id="bn" x1="0" x2="1"><stop offset="0" stop-color="#6a84b8"/><stop offset=".5" stop-color="#c8d4ea"/><stop offset="1" stop-color="#5670a4"/></linearGradient></defs><rect x="6" y="0" width="5" height="5" fill="url(#bn)"/><rect x="17" y="0" width="5" height="5" fill="url(#bn)"/><rect x="3" y="4" width="10" height="8" fill="url(#bn)"/><rect x="15" y="4" width="10" height="8" fill="url(#bn)"/><rect x="0" y="11" width="12" height="13" rx="1" fill="url(#bn)" stroke="#44608f" stroke-width="0.6"/><rect x="16" y="11" width="12" height="13" rx="1" fill="url(#bn)" stroke="#44608f" stroke-width="0.6"/><rect x="11" y="6" width="6" height="6" fill="#44608f"/></svg>
<div class="t" style="left:1143px;top:95px;font-size:12px;color:#1e2e44;">查找和选择</div>
<svg style="left:1170px;top:115px" width="5" height="3.0"><path d="M0 0H5L2.5 2.5Z" fill="#3a4a60"/></svg>
<div class="t" style="left:1113px;top:137px;font-size:12px;color:#34455c;">编辑</div>
<svg style="left:1218px;top:57px" width="17" height="16"><rect x="4" y="1" width="8" height="5" fill="#fff" stroke="#666"/><rect x="0.5" y="5.5" width="15" height="6.5" rx="1.5" fill="#8c8c8c" stroke="#555"/><rect x="4" y="9" width="8" height="6" fill="#fff" stroke="#555"/><circle cx="13" cy="3" r="3" fill="#3aa43a"/></svg>
<div class="t" style="left:1237px;top:60px;font-size:12px;color:#1e2e44;">快速打印</div>
<svg style="left:1219px;top:80px" width="16" height="15"><rect x="0.5" y="0.5" width="10" height="13" fill="#fff" stroke="#555"/><circle cx="7" cy="8" r="3.5" fill="#dde" stroke="#444" stroke-width="1.3"/><path d="M9.5 10.5L14 14" stroke="#c98030" stroke-width="2"/></svg>
<div class="t" style="left:1237px;top:81px;font-size:12px;color:#1e2e44;">打印预览和打印</div>
<svg style="left:1219px;top:101px" width="16" height="16"><path d="M0.5 0.5H8L11 3.5V15.5H0.5Z" fill="#f4f4f4" stroke="#b0b4ba"/><path d="M6 9L10 6L14 9L10 13Z" fill="#d8dce0" stroke="#b0b4ba"/></svg>
<div class="t" style="left:1237px;top:104px;font-size:12px;color:#8e9aa9;">设置打印区域</div>
<div class="t" style="left:1246px;top:137px;font-size:12px;color:#34455c;">打印命令</div>
<div class="t" style="left:1335px;top:137px;font-size:12px;color:#34455c;">新...</div>
<div class="a" style="left:0px;top:154px;width:1361px;height:30px;background:linear-gradient(#e6edf6,#dce5f1)"></div>
<div class="a" style="left:0px;top:157px;width:1350px;height:24px;background:#fff;border-top:1px solid #aebdd0;border-bottom:1px solid #aebdd0"></div>
<div class="a" style="left:0px;top:157px;width:160px;height:24px;background:#fff;border-top:1px solid #aebdd0;border-bottom:1px solid #aebdd0"></div>
<div class="t" style="left:48px;top:162px;font-size:15px;color:#111;">图表 6</div>
<svg style="left:145px;top:167px" width="7" height="4.0"><path d="M0 0H7L3.5 3.5Z" fill="#222"/></svg>
<div class="a" style="left:158px;top:157px;width:93px;height:24px;background:linear-gradient(#e6edf6,#d6e0ee);border:1px solid #aebdd0;border-radius:12px 0 0 12px"></div>
<svg style="left:163px;top:161px" width="10" height="14"><ellipse cx="5" cy="5" rx="2.5" ry="3" fill="#c8d2e0"/></svg>
<svg style="left:229px;top:161px" width="16" height="16"><text x="1" y="12" font-size="14" font-weight="bold" font-style="italic" fill="#1e2a40" font-family="Liberation Serif">f</text><text x="7" y="12" font-size="10" font-weight="bold" font-style="italic" fill="#1e2a40" font-family="Liberation Serif">x</text></svg>
<div class="a" style="left:1350px;top:157px;width:11px;height:24px;background:linear-gradient(#eef3f9,#d6e0ee);border:1px solid #aebdd0"></div>
<svg style="left:1352px;top:166px" width="8" height="6"><path d="M1 1L4 4.5L7 1" stroke="#334" stroke-width="1.5" fill="none"/></svg>
<div class="a" style="left:0px;top:184px;width:1346px;height:511px;background:#fff"></div>
<div class="a" style="left:116px;top:208px;width:1px;height:487px;background:#d2d5d8"></div>
<div class="a" style="left:196px;top:208px;width:1px;height:487px;background:#d2d5d8"></div>
<div class="a" style="left:276px;top:208px;width:1px;height:487px;background:#d2d5d8"></div>
<div class="a" style="left:356px;top:208px;width:1px;height:487px;background:#d2d5d8"></div>
<div class="a" style="left:436px;top:208px;width:1px;height:487px;background:#d2d5d8"></div>
<div class="a" style="left:516px;top:208px;width:1px;height:487px;background:#d2d5d8"></div>
<div class="a" style="left:596px;top:208px;width:1px;height:487px;background:#d2d5d8"></div>
<div class="a" style="left:676px;top:208px;width:1px;height:487px;background:#d2d5d8"></div>
<div class="a" style="left:756px;top:208px;width:1px;height:487px;background:#d2d5d8"></div>
<div class="a" style="left:836px;top:208px;width:1px;height:487px;background:#d2d5d8"></div>
<div class="a" style="left:916px;top:208px;width:1px;height:487px;background:#d2d5d8"></div>
<div class="a" style="left:996px;top:208px;width:1px;height:487px;background:#d2d5d8"></div>
<div class="a" style="left:1076px;top:208px;width:1px;height:487px;background:#d2d5d8"></div>
<div class="a" style="left:1156px;top:208px;width:1px;height:487px;background:#d2d5d8"></div>
<div class="a" style="left:1236px;top:208px;width:1px;height:487px;background:#d2d5d8"></div>
<div class="a" style="left:1316px;top:208px;width:1px;height:487px;background:#d2d5d8"></div>
<div class="a" style="left:37px;top:247px;width:1309px;height:1px;background:#d2d5d8"></div>
<div class="a" style="left:37px;top:286px;width:1309px;height:1px;background:#d2d5d8"></div>
<div class="a" style="left:37px;top:325px;width:1309px;height:1px;background:#d2d5d8"></div>
<div class="a" style="left:37px;top:364px;width:1309px;height:1px;background:#d2d5d8"></div>
<div class="a" style="left:37px;top:403px;width:1309px;height:1px;background:#d2d5d8"></div>
<div class="a" style="left:37px;top:442px;width:1309px;height:1px;background:#d2d5d8"></div>
<div class="a" style="left:37px;top:465px;width:1309px;height:1px;background:#d2d5d8"></div>
<div class="a" style="left:37px;top:488px;width:1309px;height:1px;background:#d2d5d8"></div>
<div class="a" style="left:37px;top:511px;width:1309px;height:1px;background:#d2d5d8"></div>
<div class="a" style="left:37px;top:534px;width:1309px;height:1px;background:#d2d5d8"></div>
<div class="a" style="left:37px;top:557px;width:1309px;height:1px;background:#d2d5d8"></div>
<div class="a" style="left:37px;top:580px;width:1309px;height:1px;background:#d2d5d8"></div>
<div class="a" style="left:37px;top:603px;width:1309px;height:1px;background:#d2d5d8"></div>
<div class="a" style="left:37px;top:626px;width:1309px;height:1px;background:#d2d5d8"></div>
<div class="a" style="left:37px;top:649px;width:1309px;height:1px;background:#d2d5d8"></div>
<div class="a" style="left:37px;top:672px;width:1309px;height:1px;background:#d2d5d8"></div>
<div class="a" style="left:37px;top:695px;width:1309px;height:1px;background:#d2d5d8"></div>
<div class="a" style="left:0px;top:184px;width:1346px;height:24px;background:linear-gradient(#dfe9f6,#d6e2f1);border-bottom:1px solid #93a6bd"></div>
<div class="a" style="left:36px;top:184px;width:1px;height:24px;background:#9fb2c8"></div>
<div class="t" style="left:-24.0px;top:189px;width:200px;text-align:center;font-size:16px;color:#1e3250;">A</div>
<div class="a" style="left:116px;top:184px;width:1px;height:24px;background:#9fb2c8"></div>
<div class="t" style="left:56.0px;top:189px;width:200px;text-align:center;font-size:16px;color:#1e3250;">B</div>
<div class="a" style="left:196px;top:184px;width:1px;height:24px;background:#9fb2c8"></div>
<div class="t" style="left:136.0px;top:189px;width:200px;text-align:center;font-size:16px;color:#1e3250;">C</div>
<div class="a" style="left:276px;top:184px;width:1px;height:24px;background:#9fb2c8"></div>
<div class="t" style="left:216.0px;top:189px;width:200px;text-align:center;font-size:16px;color:#1e3250;">D</div>
<div class="a" style="left:356px;top:184px;width:1px;height:24px;background:#9fb2c8"></div>
<div class="t" style="left:296.0px;top:189px;width:200px;text-align:center;font-size:16px;color:#1e3250;">E</div>
<div class="a" style="left:436px;top:184px;width:1px;height:24px;background:#9fb2c8"></div>
<div class="t" style="left:376.0px;top:189px;width:200px;text-align:center;font-size:16px;color:#1e3250;">F</div>
<div class="a" style="left:516px;top:184px;width:1px;height:24px;background:#9fb2c8"></div>
<div class="t" style="left:456.0px;top:189px;width:200px;text-align:center;font-size:16px;color:#1e3250;">G</div>
<div class="a" style="left:596px;top:184px;width:1px;height:24px;background:#9fb2c8"></div>
<div class="t" style="left:536.0px;top:189px;width:200px;text-align:center;font-size:16px;color:#1e3250;">H</div>
<div class="a" style="left:676px;top:184px;width:1px;height:24px;background:#9fb2c8"></div>
<div class="t" style="left:616.0px;top:189px;width:200px;text-align:center;font-size:16px;color:#1e3250;">I</div>
<div class="a" style="left:756px;top:184px;width:1px;height:24px;background:#9fb2c8"></div>
<div class="t" style="left:696.0px;top:189px;width:200px;text-align:center;font-size:16px;color:#1e3250;">J</div>
<div class="a" style="left:836px;top:184px;width:1px;height:24px;background:#9fb2c8"></div>
<div class="t" style="left:776.0px;top:189px;width:200px;text-align:center;font-size:16px;color:#1e3250;">K</div>
<div class="a" style="left:916px;top:184px;width:1px;height:24px;background:#9fb2c8"></div>
<div class="t" style="left:856.0px;top:189px;width:200px;text-align:center;font-size:16px;color:#1e3250;">L</div>
<div class="a" style="left:996px;top:184px;width:1px;height:24px;background:#9fb2c8"></div>
<div class="t" style="left:936.0px;top:189px;width:200px;text-align:center;font-size:16px;color:#1e3250;">M</div>
<div class="a" style="left:1076px;top:184px;width:1px;height:24px;background:#9fb2c8"></div>
<div class="t" style="left:1016.0px;top:189px;width:200px;text-align:center;font-size:16px;color:#1e3250;">N</div>
<div class="a" style="left:1156px;top:184px;width:1px;height:24px;background:#9fb2c8"></div>
<div class="t" style="left:1096.0px;top:189px;width:200px;text-align:center;font-size:16px;color:#1e3250;">O</div>
<div class="a" style="left:1236px;top:184px;width:1px;height:24px;background:#9fb2c8"></div>
<div class="t" style="left:1176.0px;top:189px;width:200px;text-align:center;font-size:16px;color:#1e3250;">P</div>
<div class="a" style="left:1316px;top:184px;width:1px;height:24px;background:#9fb2c8"></div>
<div class="a" style="left:0px;top:184px;width:37px;height:24px;background:#dfe8f4;border:1px solid #a9b6c6"></div>
<svg style="left:0;top:184px" width="36" height="24"><path d="M32 6 L32 21 L17 21 Z" fill="#b4c2d6"/></svg>
<div class="a" style="left:0px;top:208px;width:36px;height:487px;background:#dbe6f4"></div>
<div class="a" style="left:36px;top:208px;width:1px;height:487px;background:#93a6bd"></div>
<div class="a" style="left:0px;top:247px;width:36px;height:1px;background:#93a6bd"></div>
<div class="t" style="left:0.0px;top:229px;width:36px;text-align:center;font-size:16px;color:#1e3250;">1</div>
<div class="a" style="left:0px;top:286px;width:36px;height:1px;background:#93a6bd"></div>
<div class="t" style="left:0.0px;top:268px;width:36px;text-align:center;font-size:16px;color:#1e3250;">2</div>
<div class="a" style="left:0px;top:325px;width:36px;height:1px;background:#93a6bd"></div>
<div class="t" style="left:0.0px;top:307px;width:36px;text-align:center;font-size:16px;color:#1e3250;">3</div>
<div class="a" style="left:0px;top:364px;width:36px;height:1px;background:#93a6bd"></div>
<div class="t" style="left:0.0px;top:346px;width:36px;text-align:center;font-size:16px;color:#1e3250;">4</div>
<div class="a" style="left:0px;top:403px;width:36px;height:1px;background:#93a6bd"></div>
<div class="t" style="left:0.0px;top:385px;width:36px;text-align:center;font-size:16px;color:#1e3250;">5</div>
<div class="a" style="left:0px;top:442px;width:36px;height:1px;background:#93a6bd"></div>
<div class="t" style="left:0.0px;top:424px;width:36px;text-align:center;font-size:16px;color:#1e3250;">6</div>
<div class="a" style="left:0px;top:465px;width:36px;height:1px;background:#93a6bd"></div>
<div class="t" style="left:0.0px;top:447px;width:36px;text-align:center;font-size:16px;color:#1e3250;">7</div>
<div class="a" style="left:0px;top:488px;width:36px;height:1px;background:#93a6bd"></div>
<div class="t" style="left:0.0px;top:470px;width:36px;text-align:center;font-size:16px;color:#1e3250;">8</div>
<div class="a" style="left:0px;top:511px;width:36px;height:1px;background:#93a6bd"></div>
<div class="t" style="left:0.0px;top:493px;width:36px;text-align:center;font-size:16px;color:#1e3250;">9</div>
<div class="a" style="left:0px;top:534px;width:36px;height:1px;background:#93a6bd"></div>
<div class="t" style="left:0.0px;top:516px;width:36px;text-align:center;font-size:16px;color:#1e3250;">10</div>
<div class="a" style="left:0px;top:557px;width:36px;height:1px;background:#93a6bd"></div>
<div class="t" style="left:0.0px;top:539px;width:36px;text-align:center;font-size:16px;color:#1e3250;">11</div>
<div class="a" style="left:0px;top:580px;width:36px;height:1px;background:#93a6bd"></div>
<div class="t" style="left:0.0px;top:562px;width:36px;text-align:center;font-size:16px;color:#1e3250;">12</div>
<div class="a" style="left:0px;top:603px;width:36px;height:1px;background:#93a6bd"></div>
<div class="t" style="left:0.0px;top:585px;width:36px;text-align:center;font-size:16px;color:#1e3250;">13</div>
<div class="a" style="left:0px;top:626px;width:36px;height:1px;background:#93a6bd"></div>
<div class="t" style="left:0.0px;top:608px;width:36px;text-align:center;font-size:16px;color:#1e3250;">14</div>
<div class="a" style="left:0px;top:649px;width:36px;height:1px;background:#93a6bd"></div>
<div class="t" style="left:0.0px;top:631px;width:36px;text-align:center;font-size:16px;color:#1e3250;">15</div>
<div class="a" style="left:0px;top:672px;width:36px;height:1px;background:#93a6bd"></div>
<div class="t" style="left:0.0px;top:654px;width:36px;text-align:center;font-size:16px;color:#1e3250;">16</div>
<div class="a" style="left:0px;top:695px;width:36px;height:1px;background:#93a6bd"></div>
<div class="t" style="left:0.0px;top:677px;width:36px;text-align:center;font-size:16px;color:#1e3250;">17</div>
<div class="a" style="left:37px;top:208px;width:400px;height:39px;background:#00b0f0"></div>
<div class="t" style="left:36.0px;top:221px;width:80px;text-align:center;font-size:16px;color:#0c2448;">姓名</div>
<div class="t" style="left:116.0px;top:221px;width:80px;text-align:center;font-size:16px;color:#0c2448;">1月</div>
<div class="t" style="left:196.0px;top:221px;width:80px;text-align:center;font-size:16px;color:#0c2448;">2月</div>
<div class="t" style="left:276.0px;top:221px;width:80px;text-align:center;font-size:16px;color:#0c2448;">3月</div>
<div class="t" style="left:356.0px;top:221px;width:80px;text-align:center;font-size:16px;color:#0c2448;">总计</div>
<div class="t" style="left:36.0px;top:260px;width:80px;text-align:center;font-size:16px;color:#000;">贾赦</div>
<div class="t" style="left:116.0px;top:260px;width:80px;text-align:center;font-size:16px;color:#000;">41281</div>
<div class="t" style="left:196.0px;top:260px;width:80px;text-align:center;font-size:16px;color:#000;">31128</div>
<div class="t" style="left:276.0px;top:260px;width:80px;text-align:center;font-size:16px;color:#000;">43209</div>
<div class="t" style="left:356.0px;top:260px;width:80px;text-align:center;font-size:16px;color:#000;">115618</div>
<div class="t" style="left:36.0px;top:299px;width:80px;text-align:center;font-size:16px;color:#000;">贾政</div>
<div class="t" style="left:116.0px;top:299px;width:80px;text-align:center;font-size:16px;color:#000;">51249</div>
<div class="t" style="left:196.0px;top:299px;width:80px;text-align:center;font-size:16px;color:#000;">36437</div>
<div class="t" style="left:276.0px;top:299px;width:80px;text-align:center;font-size:16px;color:#000;">14892</div>
<div class="t" style="left:356.0px;top:299px;width:80px;text-align:center;font-size:16px;color:#000;">102578</div>
<div class="t" style="left:36.0px;top:338px;width:80px;text-align:center;font-size:16px;color:#000;">史湘云</div>
<div class="t" style="left:116.0px;top:338px;width:80px;text-align:center;font-size:16px;color:#000;">23052</div>
<div class="t" style="left:196.0px;top:338px;width:80px;text-align:center;font-size:16px;color:#000;">33260</div>
<div class="t" style="left:276.0px;top:338px;width:80px;text-align:center;font-size:16px;color:#000;">57660</div>
<div class="t" style="left:356.0px;top:338px;width:80px;text-align:center;font-size:16px;color:#000;">113972</div>
<div class="t" style="left:36.0px;top:377px;width:80px;text-align:center;font-size:16px;color:#000;">探春</div>
<div class="t" style="left:116.0px;top:377px;width:80px;text-align:center;font-size:16px;color:#000;">41393</div>
<div class="t" style="left:196.0px;top:377px;width:80px;text-align:center;font-size:16px;color:#000;">49319</div>
<div class="t" style="left:276.0px;top:377px;width:80px;text-align:center;font-size:16px;color:#000;">15432</div>
<div class="t" style="left:356.0px;top:377px;width:80px;text-align:center;font-size:16px;color:#000;">106144</div>
<div class="t" style="left:36.0px;top:416px;width:80px;text-align:center;font-size:16px;color:#000;">王熙凤</div>
<div class="t" style="left:116.0px;top:416px;width:80px;text-align:center;font-size:16px;color:#000;">40071</div>
<div class="t" style="left:196.0px;top:416px;width:80px;text-align:center;font-size:16px;color:#000;">38911</div>
<div class="t" style="left:276.0px;top:416px;width:80px;text-align:center;font-size:16px;color:#000;">43310</div>
<div class="t" style="left:356.0px;top:416px;width:80px;text-align:center;font-size:16px;color:#000;">122292</div>
<div class="a" style="left:36px;top:247px;width:401px;height:1px;background:#000"></div>
<div class="a" style="left:36px;top:286px;width:401px;height:1px;background:#000"></div>
<div class="a" style="left:36px;top:325px;width:401px;height:1px;background:#000"></div>
<div class="a" style="left:36px;top:364px;width:401px;height:1px;background:#000"></div>
<div class="a" style="left:36px;top:403px;width:401px;height:1px;background:#000"></div>
<div class="a" style="left:36px;top:442px;width:401px;height:1px;background:#000"></div>
<div class="a" style="left:116px;top:208px;width:1px;height:235px;background:#000"></div>
<div class="a" style="left:196px;top:208px;width:1px;height:235px;background:#000"></div>
<div class="a" style="left:276px;top:208px;width:1px;height:235px;background:#000"></div>
<div class="a" style="left:356px;top:208px;width:1px;height:235px;background:#000"></div>
<div class="a" style="left:436px;top:208px;width:1px;height:235px;background:#000"></div>
<div class="a" style="left:1346px;top:184px;width:15px;height:511px;background:linear-gradient(90deg,#a8bfdd,#b9cce5 60%,#c2d3ea)"></div>
<div class="a" style="left:1346px;top:184px;width:1px;height:511px;background:#8ea4c2"></div>
<div class="a" style="left:1347px;top:185px;width:14px;height:7px;background:#f2f6fb;border:1px solid #9fb0c6"></div>
<div class="a" style="left:1350px;top:188px;width:7px;height:1px;background:#889"></div>
<svg style="left:1348px;top:198px" width="11" height="7"><path d="M0.5 6.5L5.5 0.5L10.5 6.5Z" fill="#34465e"/></svg>
<div class="a" style="left:1346px;top:210px;width:15px;height:234px;background:linear-gradient(90deg,#c8daf0,#b4c9e4 50%,#9cb4d6);border:1px solid #5f7290;border-radius:2px"></div>
<div class="a" style="left:1350px;top:323px;width:7px;height:1px;background:#5a7296"></div>
<div class="a" style="left:1350px;top:325px;width:7px;height:1px;background:#5a7296"></div>
<div class="a" style="left:1350px;top:327px;width:7px;height:1px;background:#5a7296"></div>
<div class="a" style="left:1350px;top:329px;width:7px;height:1px;background:#5a7296"></div>
<svg style="left:1348px;top:684px" width="11" height="7"><path d="M0.5 0.5L5.5 6.5L10.5 0.5Z" fill="#34465e"/></svg>
<div class="a" style="left:0px;top:695px;width:1361px;height:17px;background:linear-gradient(#e4ebf5,#d6e0ec)"></div>
<div class="a" style="left:0px;top:695px;width:1361px;height:1px;background:#7d8ea6"></div>
<svg style="left:6px;top:699px" width="58" height="10"><g fill="#4a5e7a"><rect x="0" y="1" width="1.3" height="8"/><path d="M7 1L2 5L7 9Z"/><path d="M21 1L16 5L21 9Z"/><path d="M30 1L35 5L30 9Z"/><path d="M43 1L48 5L43 9Z"/><rect x="49" y="1" width="1.3" height="8"/></g></svg>
<svg style="left:0;top:0" width="1361" height="730"><polygon points="64,696 80,696 70,711.5 64,711.5" fill="#ffff40"/></svg>
<svg style="left:0;top:0" width="1361" height="730"><polygon points="70,711.5 80,696 197,696 187,711.5" fill="#dfe7f1"/><path d="M70 711.5 L80 696" stroke="#7f90a8" fill="none"/><path d="M70 711.5 H187" stroke="#7f90a8"/></svg>
<div class="t" style="left:82px;top:699px;font-size:12px;color:#2a3a52;font-family:'Liberation Mono',monospace;letter-spacing:-0.25px">Sheet56</div>
<svg style="left:0;top:0" width="1361" height="730"><polygon points="135,711.5 145,696 269,696 259,711.5" fill="#ffff40"/><path d="M135 711.5 L145 696" stroke="#7f90a8" fill="none"/><path d="M135 711.5 H259" stroke="#7f90a8"/></svg>
<div class="t" style="left:147px;top:697px;font-size:14px;color:#111;">姓名</div>
<div class="t" style="left:183px;top:699px;font-size:12px;color:#111;font-family:'Liberation Mono',monospace">(3)</div>
<svg style="left:0;top:0" width="1361" height="730"><polygon points="207,711.5 217,696 335,696 325,711.5" fill="#dfe7f1"/><path d="M207 711.5 L217 696" stroke="#7f90a8" fill="none"/><path d="M207 711.5 H325" stroke="#7f90a8"/></svg>
<div class="t" style="left:219px;top:699px;font-size:12px;color:#2a3a52;font-family:'Liberation Mono',monospace;letter-spacing:-0.25px">Sheet55</div>
<svg style="left:0;top:0" width="1361" height="730"><polygon points="273,711.5 283,696 400,696 390,711.5" fill="#dfe7f1"/><path d="M273 711.5 L283 696" stroke="#7f90a8" fill="none"/><path d="M273 711.5 H390" stroke="#7f90a8"/></svg>
<div class="t" style="left:285px;top:699px;font-size:12px;color:#2a3a52;font-family:'Liberation Mono',monospace;letter-spacing:-0.25px">Sheet68</div>
<svg style="left:0;top:0" width="1361" height="730"><polygon points="338,711.5 348,696 464,696 454,711.5" fill="#dfe7f1"/><path d="M338 711.5 L348 696" stroke="#7f90a8" fill="none"/><path d="M338 711.5 H454" stroke="#7f90a8"/></svg>
<div class="t" style="left:350px;top:699px;font-size:12px;color:#2a3a52;font-family:'Liberation Mono',monospace;letter-spacing:-0.25px">Sheet57</div>
<svg style="left:0;top:0" width="1361" height="730"><polygon points="402,711.5 412,696 528,696 518,711.5" fill="#dfe7f1"/><path d="M402 711.5 L412 696" stroke="#7f90a8" fill="none"/><path d="M402 711.5 H518" stroke="#7f90a8"/></svg>
<div class="t" style="left:414px;top:699px;font-size:12px;color:#2a3a52;font-family:'Liberation Mono',monospace;letter-spacing:-0.25px">Sheet59</div>
<svg style="left:0;top:0" width="1361" height="730"><polygon points="466,711.5 476,696 595,696 585,711.5" fill="#dfe7f1"/><path d="M466 711.5 L476 696" stroke="#7f90a8" fill="none"/><path d="M466 711.5 H585" stroke="#7f90a8"/></svg>
<div class="t" style="left:478px;top:699px;font-size:12px;color:#2a3a52;font-family:'Liberation Mono',monospace;letter-spacing:-0.25px">Sheet60</div>
<svg style="left:0;top:0" width="1361" height="730"><polygon points="533,711.5 543,696 659,696 649,711.5" fill="#dfe7f1"/><path d="M533 711.5 L543 696" stroke="#7f90a8" fill="none"/><path d="M533 711.5 H649" stroke="#7f90a8"/></svg>
<div class="t" style="left:545px;top:699px;font-size:12px;color:#2a3a52;font-family:'Liberation Mono',monospace;letter-spacing:-0.25px">Sheet61</div>
<svg style="left:0;top:0" width="1361" height="730"><polygon points="597,711.5 607,696 725,696 715,711.5" fill="#dfe7f1"/><path d="M597 711.5 L607 696" stroke="#7f90a8" fill="none"/><path d="M597 711.5 H715" stroke="#7f90a8"/></svg>
<div class="t" style="left:609px;top:699px;font-size:12px;color:#2a3a52;font-family:'Liberation Mono',monospace;letter-spacing:-0.25px">Sheet62</div>
<svg style="left:0;top:0" width="1361" height="730"><polygon points="663,711.5 673,696 818,696 808,711.5" fill="#dfe7f1"/><path d="M663 711.5 L673 696" stroke="#7f90a8" fill="none"/><path d="M663 711.5 H808" stroke="#7f90a8"/></svg>
<div class="t" style="left:675px;top:699px;font-size:12px;color:#2a3a52;font-family:'Liberation Mono',monospace;letter-spacing:-0.25px">Sheet62 (2)</div>
<svg style="left:0;top:0" width="1361" height="730"><polygon points="756,711.5 766,696 882,696 872,711.5" fill="#dfe7f1"/><path d="M756 711.5 L766 696" stroke="#7f90a8" fill="none"/><path d="M756 711.5 H872" stroke="#7f90a8"/></svg>
<div class="t" style="left:768px;top:699px;font-size:12px;color:#2a3a52;font-family:'Liberation Mono',monospace;letter-spacing:-0.25px">Sheet64</div>
<svg style="left:0;top:0" width="1361" height="730"><polygon points="820,711.5 830,696 947,696 937,711.5" fill="#dfe7f1"/><path d="M820 711.5 L830 696" stroke="#7f90a8" fill="none"/><path d="M820 711.5 H937" stroke="#7f90a8"/></svg>
<div class="t" style="left:832px;top:699px;font-size:12px;color:#2a3a52;font-family:'Liberation Mono',monospace;letter-spacing:-0.25px">Sheet65</div>
<svg style="left:0;top:0" width="1361" height="730"><polygon points="885,711.5 895,696 1013,696 1003,711.5" fill="#dfe7f1"/><path d="M885 711.5 L895 696" stroke="#7f90a8" fill="none"/><path d="M885 711.5 H1003" stroke="#7f90a8"/></svg>
<div class="t" style="left:897px;top:699px;font-size:12px;color:#2a3a52;font-family:'Liberation Mono',monospace;letter-spacing:-0.25px">Sheet66</div>
<svg style="left:0;top:0" width="1361" height="730"><polygon points="951,711.5 961,696 1077,696 1067,711.5" fill="#dfe7f1"/><path d="M951 711.5 L961 696" stroke="#7f90a8" fill="none"/><path d="M951 711.5 H1067" stroke="#7f90a8"/></svg>
<div class="t" style="left:963px;top:699px;font-size:12px;color:#2a3a52;font-family:'Liberation Mono',monospace;letter-spacing:-0.25px">Sheet67</div>
<svg style="left:0;top:0" width="1361" height="730"><polygon points="1015,711.5 1025,696 1142,696 1132,711.5" fill="#dfe7f1"/><path d="M1015 711.5 L1025 696" stroke="#7f90a8" fill="none"/><path d="M1015 711.5 H1132" stroke="#7f90a8"/></svg>
<div class="t" style="left:1027px;top:699px;font-size:12px;color:#2a3a52;font-family:'Liberation Mono',monospace;letter-spacing:-0.25px">Sheet70</div>
<svg style="left:0;top:0" width="1361" height="730"><polygon points="1080,711.5 1090,696 1210,696 1200,711.5" fill="#dfe7f1"/><path d="M1080 711.5 L1090 696" stroke="#7f90a8" fill="none"/><path d="M1080 711.5 H1200" stroke="#7f90a8"/></svg>
<div class="t" style="left:1092px;top:699px;font-size:12px;color:#2a3a52;font-family:'Liberation Mono',monospace;letter-spacing:-0.25px">Sheet69</div>
<svg style="left:0;top:0" width="1361" height="730"><polygon points="1149,696 1221,696 1210,711.5 1146,711.5" fill="#fff"/><path d="M1149 696 L1146 711.5 H1210 L1221 696" stroke="#8c9cb2" fill="none"/></svg>
<div class="t" style="left:1157px;top:699px;font-size:12px;color:#111;font-family:'Liberation Mono',monospace;letter-spacing:-0.25px">Sheet63</div>
<svg style="left:0;top:0" width="1361" height="730"><path d="M1221 696 L1210 711.5 H1245 L1256 696" stroke="#8c9cb2" fill="#dfe7f1"/><circle cx="1228" cy="700" r="2.5" fill="#f0c030"/><rect x="1229.5" y="701.5" width="10" height="8" rx="1" fill="#fff" stroke="#667"/></svg>
<div class="a" style="left:1284px;top:696px;width:62px;height:16px;background:linear-gradient(#c4d4ea,#aec2de)"></div>
<div class="a" style="left:1285px;top:698px;width:5px;height:12px;background:#fff;border:1px solid #a8b8cc"></div>
<svg style="left:1294px;top:700px" width="6" height="9"><path d="M6 0L0 4.5L6 9Z" fill="#34455c"/></svg>
<div class="a" style="left:1305px;top:698px;width:15px;height:12px;background:linear-gradient(#d8e4f2,#b8cbe4);border:1px solid #7f98bc"></div>
<div class="a" style="left:1309px;top:701px;width:1px;height:7px;background:#5a7296"></div>
<div class="a" style="left:1311px;top:701px;width:1px;height:7px;background:#5a7296"></div>
<div class="a" style="left:1313px;top:701px;width:1px;height:7px;background:#5a7296"></div>
<div class="a" style="left:1315px;top:701px;width:1px;height:7px;background:#5a7296"></div>
<svg style="left:1326px;top:700px" width="6" height="9"><path d="M0 0L6 4.5L0 9Z" fill="#34455c"/></svg>
<div class="a" style="left:1338px;top:698px;width:5px;height:12px;background:#fff;border:1px solid #a8b8cc"></div>
<div class="a" style="left:0px;top:712px;width:1361px;height:18px;background:linear-gradient(#dfe8f3,#cbd8e9)"></div>
<div class="t" style="left:8px;top:715px;font-size:12px;color:#223;">就绪</div>
<div class="a" style="left:40px;top:714px;width:1px;height:15px;background:#b0bed0"></div>
<svg style="left:50px;top:714px" width="16" height="14"><rect x="1.5" y="2.5" width="14" height="11" fill="#fff" stroke="#4a6ea8"/><rect x="1.5" y="2.5" width="14" height="3" fill="#4a6ea8"/><circle cx="4" cy="3" r="3" fill="#e04030"/><path d="M4 8H13M4 11H13" stroke="#8aa"/></svg>
<div class="a" style="left:76px;top:714px;width:1px;height:15px;background:#b0bed0"></div>
<div class="a" style="left:1123px;top:713px;width:20px;height:16px;background:linear-gradient(#fde8a8,#f8c860);border:1px solid #c8a040"></div>
<svg style="left:1127px;top:716px" width="13" height="11"><rect x="0.5" y="0.5" width="12" height="10" fill="#fff" stroke="#445"/><path d="M4.5 0.5V10.5M8.5 0.5V10.5M0.5 4H12.5M0.5 7H12.5" stroke="#445"/></svg>
<svg style="left:1147px;top:716px" width="13" height="11"><rect x="0.5" y="0.5" width="12" height="10" fill="#fff" stroke="#556"/><rect x="3" y="2.5" width="7" height="6" fill="none" stroke="#556"/></svg>
<svg style="left:1167px;top:716px" width="13" height="11"><rect x="0.5" y="0.5" width="12" height="10" fill="#fff" stroke="#556"/><path d="M6.5 0.5V10.5" stroke="#556"/><rect x="1" y="1" width="5" height="6" fill="#889"/><rect x="7" y="1" width="5" height="4" fill="#889"/></svg>
<div class="t" style="left:1190px;top:715px;font-size:13px;color:#223;">100%</div>
<svg style="left:1231px;top:713px" width="17" height="17"><circle cx="8.5" cy="8.5" r="7.5" fill="#e8eef6" stroke="#7a8aa2"/><rect x="4.5" y="7.5" width="8" height="2" fill="#34455c"/></svg>
<div class="a" style="left:1250px;top:721px;width:92px;height:1px;background:#8a9ab2"></div>
<div class="a" style="left:1250px;top:722px;width:92px;height:1px;background:#fff"></div>
<svg style="left:1291px;top:714px" width="10" height="14"><path d="M0.5 0.5H9.5V9L5 13.5L0.5 9Z" fill="#eef2f8" stroke="#6a7a92"/></svg>
<svg style="left:1346px;top:713px" width="17" height="17"><circle cx="8.5" cy="8.5" r="7.5" fill="#e8eef6" stroke="#7a8aa2"/><rect x="4.5" y="7.5" width="8" height="2" fill="#34455c"/><rect x="7.5" y="4.5" width="2" height="8" fill="#34455c"/></svg>
<svg style="left:312px;top:251px" width="926" height="374"><rect x="1" y="1" width="924" height="372" rx="6" fill="#eaf8fa" stroke="#b4c2c4" stroke-width="1.2"/><rect x="7" y="7" width="911" height="360" fill="#fff" stroke="#a4b0b2" stroke-width="1.2"/></svg>
<div class="a" style="left:316px;top:254px;width:2px;height:2px;background:#555"></div>
<div class="a" style="left:320px;top:254px;width:2px;height:2px;background:#555"></div>
<div class="a" style="left:316px;top:258px;width:2px;height:2px;background:#555"></div>
<div class="a" style="left:1228px;top:254px;width:2px;height:2px;background:#555"></div>
<div class="a" style="left:1232px;top:254px;width:2px;height:2px;background:#555"></div>
<div class="a" style="left:1232px;top:258px;width:2px;height:2px;background:#555"></div>
<div class="a" style="left:316px;top:618px;width:2px;height:2px;background:#555"></div>
<div class="a" style="left:316px;top:622px;width:2px;height:2px;background:#555"></div>
<div class="a" style="left:320px;top:622px;width:2px;height:2px;background:#555"></div>
<div class="a" style="left:1232px;top:616px;width:2px;height:2px;background:#555"></div>
<div class="a" style="left:1228px;top:620px;width:2px;height:2px;background:#555"></div>
<div class="a" style="left:1232px;top:620px;width:2px;height:2px;background:#555"></div>
<div class="a" style="left:769px;top:254px;width:2px;height:2px;background:#4a5a5e"></div>
<div class="a" style="left:772px;top:254px;width:2px;height:2px;background:#4a5a5e"></div>
<div class="a" style="left:775px;top:254px;width:2px;height:2px;background:#4a5a5e"></div>
<div class="a" style="left:778px;top:254px;width:2px;height:2px;background:#4a5a5e"></div>
<div class="a" style="left:769px;top:620px;width:2px;height:2px;background:#4a5a5e"></div>
<div class="a" style="left:772px;top:620px;width:2px;height:2px;background:#4a5a5e"></div>
<div class="a" style="left:775px;top:620px;width:2px;height:2px;background:#4a5a5e"></div>
<div class="a" style="left:778px;top:620px;width:2px;height:2px;background:#4a5a5e"></div>
<div class="a" style="left:315px;top:430px;width:2px;height:2px;background:#4a5a5e"></div>
<div class="a" style="left:315px;top:433px;width:2px;height:2px;background:#4a5a5e"></div>
<div class="a" style="left:315px;top:436px;width:2px;height:2px;background:#4a5a5e"></div>
<div class="a" style="left:315px;top:439px;width:2px;height:2px;background:#4a5a5e"></div>
<div class="a" style="left:1232px;top:430px;width:2px;height:2px;background:#4a5a5e"></div>
<div class="a" style="left:1232px;top:433px;width:2px;height:2px;background:#4a5a5e"></div>
<div class="a" style="left:1232px;top:436px;width:2px;height:2px;background:#4a5a5e"></div>
<div class="a" style="left:1232px;top:439px;width:2px;height:2px;background:#4a5a5e"></div>
<svg style="left:0;top:0" width="1361" height="730"><line x1="376" y1="583.5" x2="1158" y2="583.5" stroke="#878787" stroke-width="1"/><line x1="376" y1="539.5" x2="1158" y2="539.5" stroke="#878787" stroke-width="1"/><line x1="376" y1="494.5" x2="1158" y2="494.5" stroke="#878787" stroke-width="1"/><line x1="376" y1="450.5" x2="1158" y2="450.5" stroke="#878787" stroke-width="1"/><line x1="376" y1="405.5" x2="1158" y2="405.5" stroke="#878787" stroke-width="1"/><line x1="376" y1="361.5" x2="1158" y2="361.5" stroke="#878787" stroke-width="1"/><line x1="376" y1="317.5" x2="1158" y2="317.5" stroke="#878787" stroke-width="1"/><line x1="376" y1="272.5" x2="1158" y2="272.5" stroke="#878787" stroke-width="1"/><line x1="380.5" y1="272" x2="380.5" y2="588" stroke="#878787"/><line x1="380.5" y1="583" x2="380.5" y2="588" stroke="#878787"/><line x1="536.5" y1="583" x2="536.5" y2="588" stroke="#878787"/><line x1="691.5" y1="583" x2="691.5" y2="588" stroke="#878787"/><line x1="847.5" y1="583" x2="847.5" y2="588" stroke="#878787"/><line x1="1002.5" y1="583" x2="1002.5" y2="588" stroke="#878787"/><line x1="1158.5" y1="583" x2="1158.5" y2="588" stroke="#878787"/><rect x="402.8" y="491.9" width="26.8" height="91.6" fill="#60497a"/><rect x="430.9" y="514.5" width="26.8" height="69.0" fill="#7a5c9d"/><rect x="459.0" y="487.7" width="26.8" height="95.8" fill="#9c88b5"/><rect x="487.1" y="327.1" width="26.8" height="256.4" fill="#c0b5cf"/><rect x="558.4" y="469.8" width="26.8" height="113.7" fill="#60497a"/><rect x="586.5" y="502.7" width="26.8" height="80.8" fill="#7a5c9d"/><rect x="614.6" y="550.5" width="26.8" height="33.0" fill="#9c88b5"/><rect x="642.7" y="356.0" width="26.8" height="227.5" fill="#c0b5cf"/><rect x="714.0" y="532.4" width="26.8" height="51.1" fill="#60497a"/><rect x="742.1" y="509.7" width="26.8" height="73.8" fill="#7a5c9d"/><rect x="770.2" y="456.0" width="26.8" height="127.5" fill="#9c88b5"/><rect x="798.3" y="330.7" width="26.8" height="252.8" fill="#c0b5cf"/><rect x="869.6" y="491.7" width="26.8" height="91.8" fill="#60497a"/><rect x="897.7" y="474.1" width="26.8" height="109.4" fill="#7a5c9d"/><rect x="925.8" y="550.5" width="26.8" height="33.0" fill="#9c88b5"/><rect x="953.9" y="347.8" width="26.8" height="235.7" fill="#c0b5cf"/><rect x="1025.2" y="494.6" width="26.8" height="88.9" fill="#60497a"/><rect x="1053.3" y="497.2" width="26.8" height="86.3" fill="#7a5c9d"/><rect x="1081.4" y="487.4" width="26.8" height="96.1" fill="#9c88b5"/><rect x="1109.5" y="312.3" width="26.8" height="271.2" fill="#c0b5cf"/></svg>
<div class="t" style="left:300px;top:578.5px;width:70px;text-align:right;font-size:11px;letter-spacing:1px;color:#111">0</div>
<div class="t" style="left:300px;top:534.1px;width:70px;text-align:right;font-size:11px;letter-spacing:1px;color:#111">20000</div>
<div class="t" style="left:300px;top:489.8px;width:70px;text-align:right;font-size:11px;letter-spacing:1px;color:#111">40000</div>
<div class="t" style="left:300px;top:445.4px;width:70px;text-align:right;font-size:11px;letter-spacing:1px;color:#111">60000</div>
<div class="t" style="left:300px;top:401.1px;width:70px;text-align:right;font-size:11px;letter-spacing:1px;color:#111">80000</div>
<div class="t" style="left:300px;top:356.7px;width:70px;text-align:right;font-size:11px;letter-spacing:1px;color:#111">100000</div>
<div class="t" style="left:300px;top:312.4px;width:70px;text-align:right;font-size:11px;letter-spacing:1px;color:#111">120000</div>
<div class="t" style="left:300px;top:268.0px;width:70px;text-align:right;font-size:11px;letter-spacing:1px;color:#111">140000</div>
<div class="t" style="left:417.8px;top:593px;width:80px;text-align:center;font-size:13px;color:#111;">贾赦</div>
<div class="t" style="left:573.4px;top:593px;width:80px;text-align:center;font-size:13px;color:#111;">贾政</div>
<div class="t" style="left:729.0px;top:593px;width:80px;text-align:center;font-size:13px;color:#111;">史湘云</div>
<div class="t" style="left:884.6px;top:593px;width:80px;text-align:center;font-size:13px;color:#111;">探春</div>
<div class="t" style="left:1040.2px;top:593px;width:80px;text-align:center;font-size:13px;color:#111;">王熙凤</div>
<div class="a" style="left:474.8px;top:302.1px;width:50px;height:21px;background:#fff;border:1px solid #6a7274"></div>
<div class="t" style="left:474.8px;top:309.1px;width:51px;text-align:center;font-size:11px;letter-spacing:1px;color:#111">115618</div>
<svg style="left:469.8px;top:297.1px" width="61" height="32"><circle cx="5.5" cy="5.5" r="3.3" fill="#dceff6" stroke="#4f8197" stroke-width="1.1"/><circle cx="5.5" cy="26.5" r="3.3" fill="#dceff6" stroke="#4f8197" stroke-width="1.1"/><circle cx="55.5" cy="5.5" r="3.3" fill="#dceff6" stroke="#4f8197" stroke-width="1.1"/><circle cx="55.5" cy="26.5" r="3.3" fill="#dceff6" stroke="#4f8197" stroke-width="1.1"/></svg>
<div class="a" style="left:630.4px;top:331.0px;width:50px;height:21px;background:#fff;border:1px solid #6a7274"></div>
<div class="t" style="left:630.4px;top:338.0px;width:51px;text-align:center;font-size:11px;letter-spacing:1px;color:#111">102578</div>
<svg style="left:625.4px;top:326.0px" width="61" height="32"><circle cx="5.5" cy="5.5" r="3.3" fill="#dceff6" stroke="#4f8197" stroke-width="1.1"/><circle cx="5.5" cy="26.5" r="3.3" fill="#dceff6" stroke="#4f8197" stroke-width="1.1"/><circle cx="55.5" cy="5.5" r="3.3" fill="#dceff6" stroke="#4f8197" stroke-width="1.1"/><circle cx="55.5" cy="26.5" r="3.3" fill="#dceff6" stroke="#4f8197" stroke-width="1.1"/></svg>
<div class="a" style="left:786.0px;top:305.7px;width:50px;height:21px;background:#fff;border:1px solid #6a7274"></div>
<div class="t" style="left:786.0px;top:312.7px;width:51px;text-align:center;font-size:11px;letter-spacing:1px;color:#111">113972</div>
<svg style="left:781.0px;top:300.7px" width="61" height="32"><circle cx="5.5" cy="5.5" r="3.3" fill="#dceff6" stroke="#4f8197" stroke-width="1.1"/><circle cx="5.5" cy="26.5" r="3.3" fill="#dceff6" stroke="#4f8197" stroke-width="1.1"/><circle cx="55.5" cy="5.5" r="3.3" fill="#dceff6" stroke="#4f8197" stroke-width="1.1"/><circle cx="55.5" cy="26.5" r="3.3" fill="#dceff6" stroke="#4f8197" stroke-width="1.1"/></svg>
<div class="a" style="left:941.6px;top:322.8px;width:50px;height:21px;background:#fff;border:1px solid #6a7274"></div>
<div class="t" style="left:941.6px;top:329.8px;width:51px;text-align:center;font-size:11px;letter-spacing:1px;color:#111">106272</div>
<svg style="left:936.6px;top:317.8px" width="61" height="32"><circle cx="5.5" cy="5.5" r="3.3" fill="#dceff6" stroke="#4f8197" stroke-width="1.1"/><circle cx="5.5" cy="26.5" r="3.3" fill="#dceff6" stroke="#4f8197" stroke-width="1.1"/><circle cx="55.5" cy="5.5" r="3.3" fill="#dceff6" stroke="#4f8197" stroke-width="1.1"/><circle cx="55.5" cy="26.5" r="3.3" fill="#dceff6" stroke="#4f8197" stroke-width="1.1"/></svg>
<div class="a" style="left:1097.2px;top:287.3px;width:50px;height:21px;background:#fff;border:1px solid #6a7274"></div>
<div class="t" style="left:1097.2px;top:294.3px;width:51px;text-align:center;font-size:11px;letter-spacing:1px;color:#111">122292</div>
<svg style="left:1092.2px;top:282.3px" width="61" height="32"><circle cx="5.5" cy="5.5" r="3.3" fill="#dceff6" stroke="#4f8197" stroke-width="1.1"/><circle cx="5.5" cy="26.5" r="3.3" fill="#dceff6" stroke="#4f8197" stroke-width="1.1"/><circle cx="55.5" cy="5.5" r="3.3" fill="#dceff6" stroke="#4f8197" stroke-width="1.1"/><circle cx="55.5" cy="26.5" r="3.3" fill="#dceff6" stroke="#4f8197" stroke-width="1.1"/></svg>
<div class="a" style="left:1180px;top:399.0px;width:6px;height:6px;background:#65537d"></div>
<div class="t" style="left:1190px;top:395.0px;font-size:12px;color:#111;">1月</div>
<div class="a" style="left:1180px;top:423.3px;width:6px;height:6px;background:#74658f"></div>
<div class="t" style="left:1190px;top:419.3px;font-size:12px;color:#111;">2月</div>
<div class="a" style="left:1180px;top:447.6px;width:6px;height:6px;background:#9b8fb3"></div>
<div class="t" style="left:1190px;top:443.6px;font-size:12px;color:#111;">3月</div>
<div class="a" style="left:1180px;top:471.9px;width:6px;height:6px;background:#bdb6cb"></div>
<div class="t" style="left:1190px;top:467.9px;font-size:12px;color:#111;">总计</div>
<div class="a" style="left:807px;top:235px;width:262px;height:55px;background:#fff;border:1px solid #b8bec6;border-radius:3px;box-shadow:1px 1px 2px rgba(0,0,0,0.15)"></div>
<div class="a" style="left:809px;top:237px;width:68px;height:26px;background:#fff;border:1px solid #dde2e8"></div>
<div class="t" style="left:811px;top:243px;font-size:12px;color:#111;">宋体 (正5</div>
<svg style="left:867px;top:248px" width="5" height="3.0"><path d="M0 0H5L2.5 2.5Z" fill="#666"/></svg>
<div class="a" style="left:877px;top:237px;width:42px;height:26px;background:#fff;border:1px solid #dde2e8"></div>
<div class="t" style="left:880px;top:243px;font-size:12px;color:#111;">10</div>
<svg style="left:909px;top:248px" width="5" height="3.0"><path d="M0 0H5L2.5 2.5Z" fill="#666"/></svg>
<div class="t" style="left:923px;top:241px;font-size:16px;color:#223;font-family:'Liberation Serif',serif;font-weight:bold">A</div>
<svg style="left:934px;top:241px" width="6" height="4"><path d="M0 4L3 0L6 4Z" fill="#223"/></svg>
<div class="t" style="left:946px;top:245px;font-size:12px;color:#223;font-family:'Liberation Serif',serif;font-weight:bold">A</div>
<svg style="left:953px;top:243px" width="6" height="4"><path d="M0 0L3 4L6 0Z" fill="#223"/></svg>
<div class="a" style="left:965px;top:237px;width:102px;height:26px;background:#fff;border:1px solid #dde2e8"></div>
<div class="t" style="left:968px;top:243px;font-size:12px;color:#111;width:84px;overflow:hidden">系列 "总计" 数据</div>
<svg style="left:1057px;top:248px" width="5" height="3.0"><path d="M0 0H5L2.5 2.5Z" fill="#666"/></svg>
<div class="t" style="left:815px;top:269px;font-size:14px;color:#111;font-family:'Liberation Serif',serif;font-weight:bold">B</div>
<div class="t" style="left:838px;top:269px;font-size:14px;color:#111;font-family:'Liberation Serif',serif;font-style:italic;font-weight:bold">I</div>
<svg style="left:857px;top:270px" width="16" height="14"><rect x="0" y="0.0" width="14" height="1.2" fill="#4a5a72"/><rect x="0" y="2.4" width="10" height="1.2" fill="#4a5a72"/><rect x="0" y="4.8" width="14" height="1.2" fill="#4a5a72"/><rect x="0" y="7.199999999999999" width="10" height="1.2" fill="#4a5a72"/><rect x="0" y="9.6" width="14" height="1.2" fill="#4a5a72"/></svg>
<div class="a" style="left:876px;top:265px;width:20px;height:22px;background:#f4f6f9;border:1px solid #d8dde4;border-radius:2px"></div>
<svg style="left:879px;top:270px" width="16" height="14"><rect x="0" y="0.0" width="14" height="1.2" fill="#4a5a72"/><rect x="2" y="2.4" width="10" height="1.2" fill="#4a5a72"/><rect x="0" y="4.8" width="14" height="1.2" fill="#4a5a72"/><rect x="2" y="7.199999999999999" width="10" height="1.2" fill="#4a5a72"/><rect x="0" y="9.6" width="14" height="1.2" fill="#4a5a72"/></svg>
<svg style="left:901px;top:270px" width="16" height="14"><rect x="0" y="0.0" width="14" height="1.2" fill="#4a5a72"/><rect x="4" y="2.4" width="10" height="1.2" fill="#4a5a72"/><rect x="0" y="4.8" width="14" height="1.2" fill="#4a5a72"/><rect x="4" y="7.199999999999999" width="10" height="1.2" fill="#4a5a72"/><rect x="0" y="9.6" width="14" height="1.2" fill="#4a5a72"/></svg>
<div class="t" style="left:923px;top:266px;font-size:16px;color:#2a4a9a;font-family:'Liberation Serif',serif;font-weight:bold">A</div>
<div class="a" style="left:922px;top:281px;width:16px;height:3px;background:#d01818"></div>
<svg style="left:944px;top:275px" width="5" height="3.0"><path d="M0 0H5L2.5 2.5Z" fill="#555"/></svg>
<svg style="left:957px;top:268px" width="16" height="17"><path d="M3 6L8 1L13 6L8 11Z" fill="#fff" stroke="#333"/><path d="M11 5C14 5 15 8 14 10" stroke="#3a6ac8" stroke-width="2" fill="none"/><rect x="0" y="13" width="16" height="3.5" fill="#c05050"/></svg>
<svg style="left:977px;top:275px" width="5" height="3.0"><path d="M0 0H5L2.5 2.5Z" fill="#555"/></svg>
<svg style="left:990px;top:268px" width="17" height="17"><rect x="0.5" y="2.5" width="11" height="8" fill="#fff" stroke="#555"/><path d="M7 10L15 2L16.5 3.5L8.5 11.5L6 12Z" fill="#e8c860" stroke="#8a7030" stroke-width="0.7"/><rect x="0" y="13" width="16" height="3.5" fill="#4a7ab0"/></svg>
<svg style="left:1012px;top:275px" width="5" height="3.0"><path d="M0 0H5L2.5 2.5Z" fill="#555"/></svg>
<svg style="left:1024px;top:268px" width="17" height="17"><path d="M10 7L15 2" stroke="#6a58a8" stroke-width="3"/><path d="M1 14L8 6L12 9L6 16Z" fill="#e8cf6a" stroke="#a88a2a" stroke-width="0.8"/></svg>
<div class="a" style="left:807px;top:305px;width:179px;height:216px;background:#fff;border:1px solid #a8b0ba;border-radius:2px;box-shadow:2px 2px 3px rgba(0,0,0,0.18)"></div>
<div class="a" style="left:808px;top:306px;width:25px;height:214px;background:#fbfcfd"></div>
<div class="a" style="left:833px;top:306px;width:1px;height:214px;background:#e2e6ec"></div>
<div class="t" style="left:842px;top:314.2px;font-size:12px;color:#1e2e44;">删除(<u>D</u>)</div>
<div class="t" style="left:842px;top:339.0px;font-size:12px;color:#1e2e44;">重设以匹配样式(<u>A</u>)</div>
<div class="t" style="left:842px;top:367.5px;font-size:12px;color:#1e2e44;">字体(<u>F</u>)...</div>
<div class="t" style="left:842px;top:396.5px;font-size:12px;color:#1e2e44;">更改图表类型(<u>Y</u>)...</div>
<div class="t" style="left:842px;top:421.5px;font-size:12px;color:#1e2e44;">选择数据(<u>E</u>)...</div>
<div class="t" style="left:842px;top:446.5px;font-size:12px;color:#9aa4b0;">三维旋转(<u>R</u>)...</div>
<div class="t" style="left:842px;top:475.5px;font-size:12px;color:#1e2e44;">设置数据系列格式(<u>I</u>)...</div>
<div class="t" style="left:842px;top:500.5px;font-size:12px;color:#1e2e44;">设置数据标签格式(<u>F</u>)...</div>
<div class="a" style="left:842px;top:358px;width:141px;height:1px;background:repeating-linear-gradient(90deg,#c4c8ce 0 2px,transparent 2px 4px)"></div>
<div class="a" style="left:842px;top:387px;width:141px;height:1px;background:repeating-linear-gradient(90deg,#c4c8ce 0 2px,transparent 2px 4px)"></div>
<div class="a" style="left:842px;top:466px;width:141px;height:1px;background:repeating-linear-gradient(90deg,#c4c8ce 0 2px,transparent 2px 4px)"></div>
<svg style="left:813px;top:336px" width="17" height="16"><rect x="5" y="4" width="11" height="10" fill="#e8eef6" stroke="#4a6ea8"/><path d="M6 1L12 1L15 5L9 5Z" fill="#e8c040" stroke="#a88a2a" stroke-width="0.6"/><path d="M1 10H8M1 10L4 7M1 10L4 13" stroke="#3a6ac8" stroke-width="1.5"/></svg>
<div class="t" style="left:814px;top:366px;font-size:17px;color:#2a4a8a;font-family:'Liberation Serif',serif;font-weight:bold">A</div>
<svg style="left:813px;top:394px" width="17" height="17"><rect x="1" y="7" width="4" height="9" fill="#3a8ad0"/><rect x="6" y="1" width="4" height="15" fill="#f0b030"/><rect x="11" y="4" width="4" height="12" fill="#e04828"/></svg>
<svg style="left:813px;top:419px" width="17" height="17"><rect x="0.5" y="0.5" width="12" height="11" fill="#fff" stroke="#6a7a92"/><path d="M0.5 4H12.5M4.5 0.5V11.5M8.5 0.5V11.5M0.5 8H12.5" stroke="#9aa"/><rect x="0.5" y="0.5" width="12" height="3" fill="#e8c8a0"/><rect x="8.5" y="8.5" width="8" height="8" fill="#fff" stroke="#4a6ea8"/><path d="M11 15V12M13 15V10M15 15V13" stroke="#4a6ea8"/></svg>
<svg style="left:813px;top:444px" width="17" height="17"><path d="M3 3L7 0H16V10L12 14H3Z" fill="#eceef0" stroke="#c8ccd0"/><path d="M3 3H12V14M12 3L16 0" stroke="#c8ccd0" fill="none"/></svg>
<svg style="left:810px;top:495px" width="17" height="17"><rect x="0.5" y="4.5" width="10" height="11" fill="#fff" stroke="#8a96a6"/><path d="M10 2L15 0V6L10 7Z" fill="#6aa050"/></svg>
<div class="a" style="left:818px;top:483px;width:139px;height:43px;border:6px solid #e41ce4;border-top-width:7px"></div>
<svg style="left:0;top:0" width="1361" height="730" font-family="Liberation Sans"><text x="1046" y="660" font-size="54" font-weight="bold" textLength="77" lengthAdjust="spacingAndGlyphs" stroke="rgba(140,140,140,0.45)" stroke-width="2.2" paint-order="stroke" fill="rgba(255,255,255,0.92)">Bai</text><text x="1200" y="657" font-size="42" font-weight="bold" textLength="85" lengthAdjust="spacingAndGlyphs" stroke="rgba(140,140,140,0.45)" stroke-width="2.2" paint-order="stroke" fill="rgba(255,255,255,0.92)">经验</text><g fill="none" stroke="rgba(140,140,140,0.5)" stroke-width="1"><ellipse cx="1136.7" cy="613.8" rx="9" ry="11.6" transform="rotate(-15 1136.7 613.8)"/><ellipse cx="1153.8" cy="598" rx="9" ry="13"/><ellipse cx="1175.8" cy="598.8" rx="9.6" ry="12.3"/><ellipse cx="1189.5" cy="620" rx="9" ry="11.6" transform="rotate(15 1189.5 620)"/><path d="M1163 617 C1175 617 1182 628 1190 638 C1198 648 1196 663 1180 663 C1170 663 1168 660 1163 660 C1158 660 1156 663 1146 663 C1130 663 1128 648 1136 638 C1144 628 1151 617 1163 617Z" fill="rgba(255,255,255,0.5)"/></g><text x="1141" y="655" font-size="30" font-weight="bold" textLength="40" lengthAdjust="spacingAndGlyphs" stroke="rgba(140,140,140,0.45)" stroke-width="2.2" paint-order="stroke" fill="rgba(255,255,255,0.92)">du</text><text x="1046" y="688" font-size="25" font-weight="bold" textLength="242" lengthAdjust="spacingAndGlyphs" stroke="rgba(140,140,140,0.45)" stroke-width="2.2" paint-order="stroke" fill="rgba(255,255,255,0.92)">jingyan.baidu.com</text></svg>
</body></html>
